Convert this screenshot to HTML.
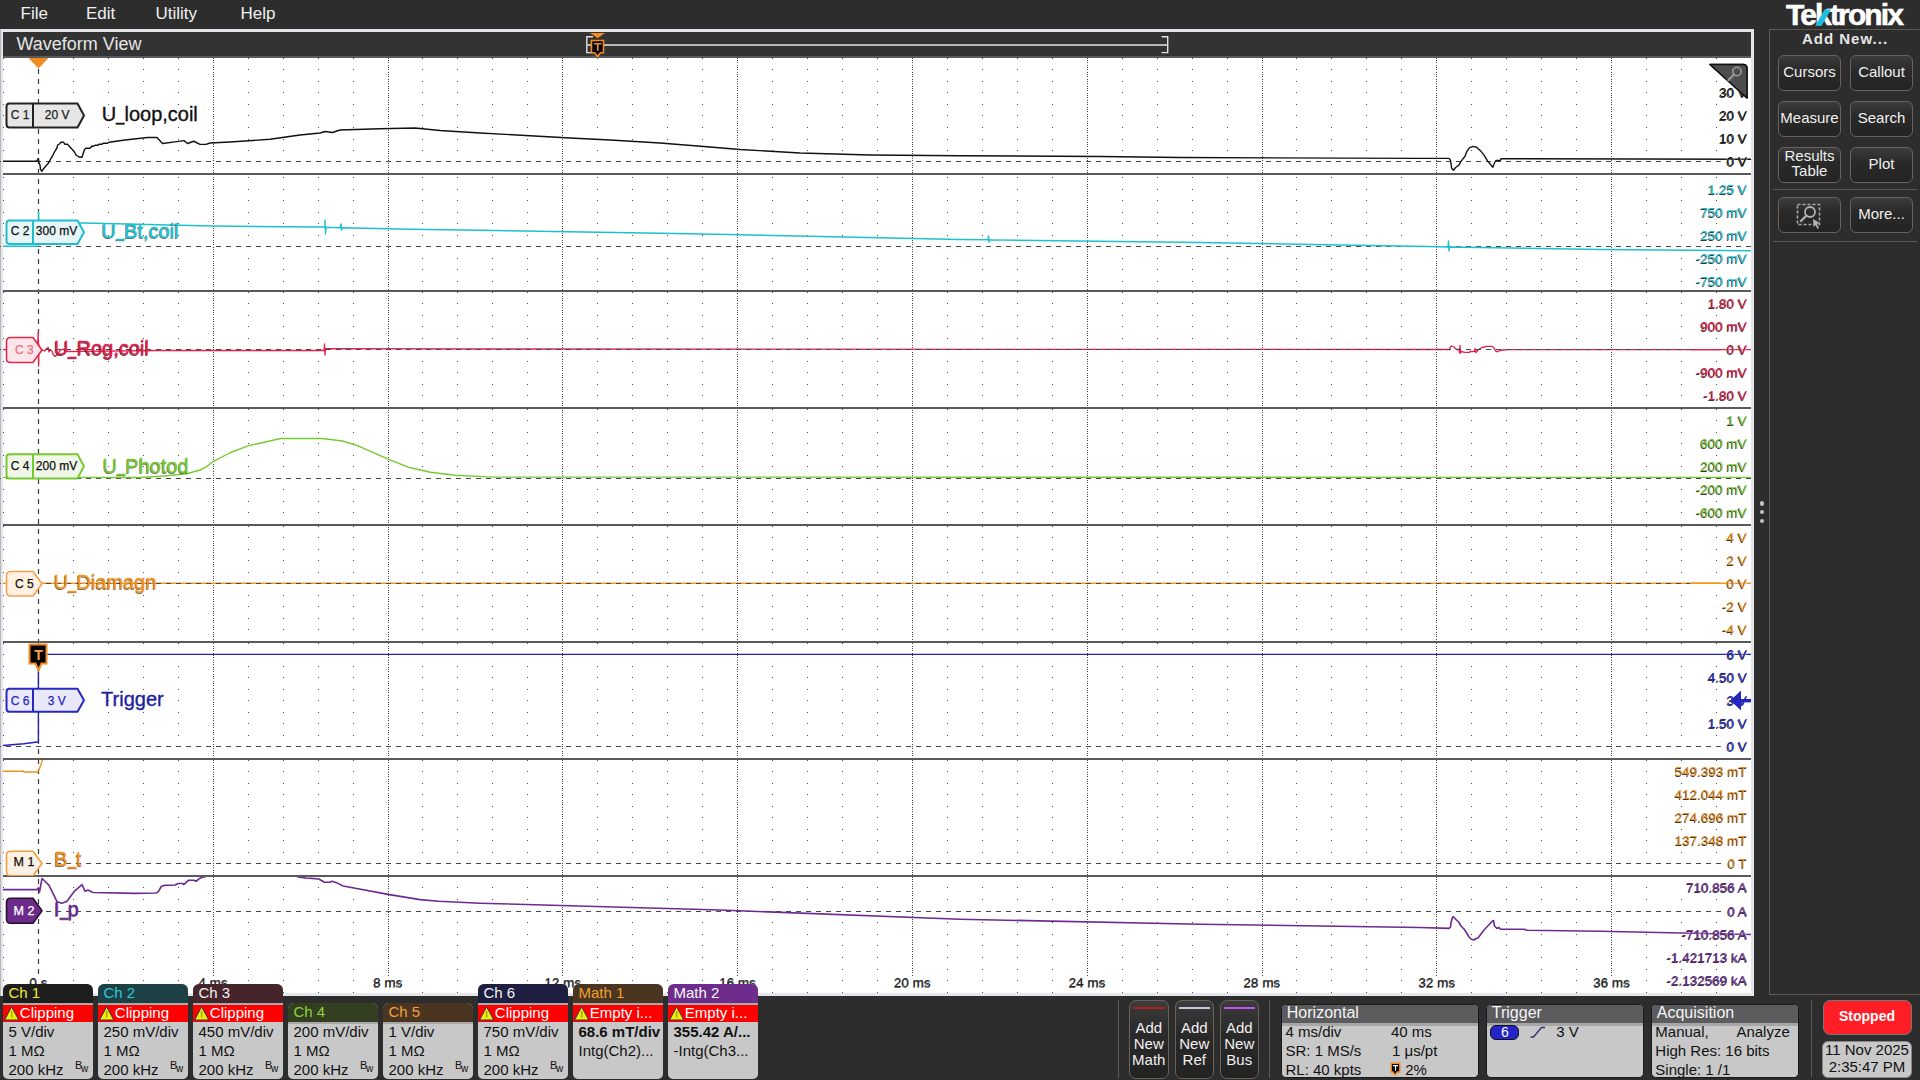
<!DOCTYPE html><html><head><meta charset="utf-8"><style>html,body{margin:0;padding:0;}body{width:1920px;height:1080px;overflow:hidden;position:relative;background:#2d2d2d;font-family:"Liberation Sans",sans-serif;}.t{position:absolute;white-space:pre;}.a{position:absolute;}.lbl{text-shadow:-0.6px 0.6px 0.3px rgba(0,0,0,.75);}.btn{position:absolute;box-sizing:border-box;border:1px solid #6b625a;border-radius:6px;background:linear-gradient(#3c3c3c,#2a2a2a 40%,#232323);}</style></head><body><div class="a" style="left:0;top:0;width:1920px;height:29px;background:#2d2d2d"></div><div class="t" style="left:20.50px;top:5.11px;font-size:17px;line-height:17px;color:#f0f0f0;font-weight:normal;">File</div><div class="t" style="left:86.00px;top:5.11px;font-size:17px;line-height:17px;color:#f0f0f0;font-weight:normal;">Edit</div><div class="t" style="left:155.50px;top:5.11px;font-size:17px;line-height:17px;color:#f0f0f0;font-weight:normal;">Utility</div><div class="t" style="left:240.50px;top:5.11px;font-size:17px;line-height:17px;color:#f0f0f0;font-weight:normal;">Help</div><div class="a" style="left:0;top:29px;width:1754px;height:967px;background:#e3e5e8"></div><div class="a" style="left:0;top:29px;width:1px;height:967px;background:#b6b8bc"></div><div class="a" style="left:3px;top:32px;width:1748px;height:24px;background:#333333"></div><div class="a" style="left:3px;top:56px;width:1748px;height:2px;background:#565a61"></div><div class="a" style="left:3px;top:58px;width:1748px;height:935px;background:#ffffff"></div><div class="t" style="left:16.50px;top:34.76px;font-size:18px;line-height:18px;color:#e6e6e6;font-weight:normal;">Waveform View</div><svg class="a" style="left:0;top:0" width="1920" height="60"><path d="M593 36.8 H586.8 V52.6 H593" fill="none" stroke="#e0e0e0" stroke-width="1.4"/><path d="M1161.5 36.8 H1167.7 V52.6 H1161.5" fill="none" stroke="#e0e0e0" stroke-width="1.4"/><rect x="587" y="44" width="580" height="2" fill="#b8b8b8"/><path d="M590 33 L605 33 L597.6 38.2 Z" fill="#f28c22"/><path d="M591.5 40.5 h12 v12.3 h-3 l-3 3.8 l-3 -3.8 h-3 z" fill="#000" stroke="#f28c22" stroke-width="1.6"/><path d="M594 43 h7.5 v1.6 h-2.9 v6.2 h-1.7 v-6.2 h-2.9 z" fill="#f28c22"/></svg><svg class="a" style="left:0;top:0" width="1920" height="1000" shape-rendering="auto"><path d="M3 69h1v1h-1zM73 69h1v1h-1zM108 69h1v1h-1zM143 69h1v1h-1zM178 69h1v1h-1zM248 69h1v1h-1zM283 69h1v1h-1zM318 69h1v1h-1zM353 69h1v1h-1zM422 69h1v1h-1zM457 69h1v1h-1zM492 69h1v1h-1zM527 69h1v1h-1zM597 69h1v1h-1zM632 69h1v1h-1zM667 69h1v1h-1zM702 69h1v1h-1zM772 69h1v1h-1zM807 69h1v1h-1zM842 69h1v1h-1zM877 69h1v1h-1zM947 69h1v1h-1zM982 69h1v1h-1zM1017 69h1v1h-1zM1052 69h1v1h-1zM1122 69h1v1h-1zM1157 69h1v1h-1zM1192 69h1v1h-1zM1227 69h1v1h-1zM1296 69h1v1h-1zM1331 69h1v1h-1zM1366 69h1v1h-1zM1401 69h1v1h-1zM1471 69h1v1h-1zM1506 69h1v1h-1zM1541 69h1v1h-1zM1576 69h1v1h-1zM1646 69h1v1h-1zM1681 69h1v1h-1zM1716 69h1v1h-1zM3 81h1v1h-1zM73 81h1v1h-1zM108 81h1v1h-1zM143 81h1v1h-1zM178 81h1v1h-1zM248 81h1v1h-1zM283 81h1v1h-1zM318 81h1v1h-1zM353 81h1v1h-1zM422 81h1v1h-1zM457 81h1v1h-1zM492 81h1v1h-1zM527 81h1v1h-1zM597 81h1v1h-1zM632 81h1v1h-1zM667 81h1v1h-1zM702 81h1v1h-1zM772 81h1v1h-1zM807 81h1v1h-1zM842 81h1v1h-1zM877 81h1v1h-1zM947 81h1v1h-1zM982 81h1v1h-1zM1017 81h1v1h-1zM1052 81h1v1h-1zM1122 81h1v1h-1zM1157 81h1v1h-1zM1192 81h1v1h-1zM1227 81h1v1h-1zM1296 81h1v1h-1zM1331 81h1v1h-1zM1366 81h1v1h-1zM1401 81h1v1h-1zM1471 81h1v1h-1zM1506 81h1v1h-1zM1541 81h1v1h-1zM1576 81h1v1h-1zM1646 81h1v1h-1zM1681 81h1v1h-1zM1716 81h1v1h-1zM3 92h1v1h-1zM73 92h1v1h-1zM108 92h1v1h-1zM143 92h1v1h-1zM178 92h1v1h-1zM248 92h1v1h-1zM283 92h1v1h-1zM318 92h1v1h-1zM353 92h1v1h-1zM422 92h1v1h-1zM457 92h1v1h-1zM492 92h1v1h-1zM527 92h1v1h-1zM597 92h1v1h-1zM632 92h1v1h-1zM667 92h1v1h-1zM702 92h1v1h-1zM772 92h1v1h-1zM807 92h1v1h-1zM842 92h1v1h-1zM877 92h1v1h-1zM947 92h1v1h-1zM982 92h1v1h-1zM1017 92h1v1h-1zM1052 92h1v1h-1zM1122 92h1v1h-1zM1157 92h1v1h-1zM1192 92h1v1h-1zM1227 92h1v1h-1zM1296 92h1v1h-1zM1331 92h1v1h-1zM1366 92h1v1h-1zM1401 92h1v1h-1zM1471 92h1v1h-1zM1506 92h1v1h-1zM1541 92h1v1h-1zM1576 92h1v1h-1zM1646 92h1v1h-1zM1681 92h1v1h-1zM1716 92h1v1h-1zM3 104h1v1h-1zM73 104h1v1h-1zM108 104h1v1h-1zM143 104h1v1h-1zM178 104h1v1h-1zM248 104h1v1h-1zM283 104h1v1h-1zM318 104h1v1h-1zM353 104h1v1h-1zM422 104h1v1h-1zM457 104h1v1h-1zM492 104h1v1h-1zM527 104h1v1h-1zM597 104h1v1h-1zM632 104h1v1h-1zM667 104h1v1h-1zM702 104h1v1h-1zM772 104h1v1h-1zM807 104h1v1h-1zM842 104h1v1h-1zM877 104h1v1h-1zM947 104h1v1h-1zM982 104h1v1h-1zM1017 104h1v1h-1zM1052 104h1v1h-1zM1122 104h1v1h-1zM1157 104h1v1h-1zM1192 104h1v1h-1zM1227 104h1v1h-1zM1296 104h1v1h-1zM1331 104h1v1h-1zM1366 104h1v1h-1zM1401 104h1v1h-1zM1471 104h1v1h-1zM1506 104h1v1h-1zM1541 104h1v1h-1zM1576 104h1v1h-1zM1646 104h1v1h-1zM1681 104h1v1h-1zM1716 104h1v1h-1zM3 115h1v1h-1zM73 115h1v1h-1zM108 115h1v1h-1zM143 115h1v1h-1zM178 115h1v1h-1zM248 115h1v1h-1zM283 115h1v1h-1zM318 115h1v1h-1zM353 115h1v1h-1zM422 115h1v1h-1zM457 115h1v1h-1zM492 115h1v1h-1zM527 115h1v1h-1zM597 115h1v1h-1zM632 115h1v1h-1zM667 115h1v1h-1zM702 115h1v1h-1zM772 115h1v1h-1zM807 115h1v1h-1zM842 115h1v1h-1zM877 115h1v1h-1zM947 115h1v1h-1zM982 115h1v1h-1zM1017 115h1v1h-1zM1052 115h1v1h-1zM1122 115h1v1h-1zM1157 115h1v1h-1zM1192 115h1v1h-1zM1227 115h1v1h-1zM1296 115h1v1h-1zM1331 115h1v1h-1zM1366 115h1v1h-1zM1401 115h1v1h-1zM1471 115h1v1h-1zM1506 115h1v1h-1zM1541 115h1v1h-1zM1576 115h1v1h-1zM1646 115h1v1h-1zM1681 115h1v1h-1zM1716 115h1v1h-1zM3 127h1v1h-1zM73 127h1v1h-1zM108 127h1v1h-1zM143 127h1v1h-1zM178 127h1v1h-1zM248 127h1v1h-1zM283 127h1v1h-1zM318 127h1v1h-1zM353 127h1v1h-1zM422 127h1v1h-1zM457 127h1v1h-1zM492 127h1v1h-1zM527 127h1v1h-1zM597 127h1v1h-1zM632 127h1v1h-1zM667 127h1v1h-1zM702 127h1v1h-1zM772 127h1v1h-1zM807 127h1v1h-1zM842 127h1v1h-1zM877 127h1v1h-1zM947 127h1v1h-1zM982 127h1v1h-1zM1017 127h1v1h-1zM1052 127h1v1h-1zM1122 127h1v1h-1zM1157 127h1v1h-1zM1192 127h1v1h-1zM1227 127h1v1h-1zM1296 127h1v1h-1zM1331 127h1v1h-1zM1366 127h1v1h-1zM1401 127h1v1h-1zM1471 127h1v1h-1zM1506 127h1v1h-1zM1541 127h1v1h-1zM1576 127h1v1h-1zM1646 127h1v1h-1zM1681 127h1v1h-1zM1716 127h1v1h-1zM3 139h1v1h-1zM73 139h1v1h-1zM108 139h1v1h-1zM143 139h1v1h-1zM178 139h1v1h-1zM248 139h1v1h-1zM283 139h1v1h-1zM318 139h1v1h-1zM353 139h1v1h-1zM422 139h1v1h-1zM457 139h1v1h-1zM492 139h1v1h-1zM527 139h1v1h-1zM597 139h1v1h-1zM632 139h1v1h-1zM667 139h1v1h-1zM702 139h1v1h-1zM772 139h1v1h-1zM807 139h1v1h-1zM842 139h1v1h-1zM877 139h1v1h-1zM947 139h1v1h-1zM982 139h1v1h-1zM1017 139h1v1h-1zM1052 139h1v1h-1zM1122 139h1v1h-1zM1157 139h1v1h-1zM1192 139h1v1h-1zM1227 139h1v1h-1zM1296 139h1v1h-1zM1331 139h1v1h-1zM1366 139h1v1h-1zM1401 139h1v1h-1zM1471 139h1v1h-1zM1506 139h1v1h-1zM1541 139h1v1h-1zM1576 139h1v1h-1zM1646 139h1v1h-1zM1681 139h1v1h-1zM1716 139h1v1h-1zM3 150h1v1h-1zM73 150h1v1h-1zM108 150h1v1h-1zM143 150h1v1h-1zM178 150h1v1h-1zM248 150h1v1h-1zM283 150h1v1h-1zM318 150h1v1h-1zM353 150h1v1h-1zM422 150h1v1h-1zM457 150h1v1h-1zM492 150h1v1h-1zM527 150h1v1h-1zM597 150h1v1h-1zM632 150h1v1h-1zM667 150h1v1h-1zM702 150h1v1h-1zM772 150h1v1h-1zM807 150h1v1h-1zM842 150h1v1h-1zM877 150h1v1h-1zM947 150h1v1h-1zM982 150h1v1h-1zM1017 150h1v1h-1zM1052 150h1v1h-1zM1122 150h1v1h-1zM1157 150h1v1h-1zM1192 150h1v1h-1zM1227 150h1v1h-1zM1296 150h1v1h-1zM1331 150h1v1h-1zM1366 150h1v1h-1zM1401 150h1v1h-1zM1471 150h1v1h-1zM1506 150h1v1h-1zM1541 150h1v1h-1zM1576 150h1v1h-1zM1646 150h1v1h-1zM1681 150h1v1h-1zM1716 150h1v1h-1zM3 177h1v1h-1zM73 177h1v1h-1zM108 177h1v1h-1zM143 177h1v1h-1zM178 177h1v1h-1zM248 177h1v1h-1zM283 177h1v1h-1zM318 177h1v1h-1zM353 177h1v1h-1zM422 177h1v1h-1zM457 177h1v1h-1zM492 177h1v1h-1zM527 177h1v1h-1zM597 177h1v1h-1zM632 177h1v1h-1zM667 177h1v1h-1zM702 177h1v1h-1zM772 177h1v1h-1zM807 177h1v1h-1zM842 177h1v1h-1zM877 177h1v1h-1zM947 177h1v1h-1zM982 177h1v1h-1zM1017 177h1v1h-1zM1052 177h1v1h-1zM1122 177h1v1h-1zM1157 177h1v1h-1zM1192 177h1v1h-1zM1227 177h1v1h-1zM1296 177h1v1h-1zM1331 177h1v1h-1zM1366 177h1v1h-1zM1401 177h1v1h-1zM1471 177h1v1h-1zM1506 177h1v1h-1zM1541 177h1v1h-1zM1576 177h1v1h-1zM1646 177h1v1h-1zM1681 177h1v1h-1zM1716 177h1v1h-1zM3 189h1v1h-1zM73 189h1v1h-1zM108 189h1v1h-1zM143 189h1v1h-1zM178 189h1v1h-1zM248 189h1v1h-1zM283 189h1v1h-1zM318 189h1v1h-1zM353 189h1v1h-1zM422 189h1v1h-1zM457 189h1v1h-1zM492 189h1v1h-1zM527 189h1v1h-1zM597 189h1v1h-1zM632 189h1v1h-1zM667 189h1v1h-1zM702 189h1v1h-1zM772 189h1v1h-1zM807 189h1v1h-1zM842 189h1v1h-1zM877 189h1v1h-1zM947 189h1v1h-1zM982 189h1v1h-1zM1017 189h1v1h-1zM1052 189h1v1h-1zM1122 189h1v1h-1zM1157 189h1v1h-1zM1192 189h1v1h-1zM1227 189h1v1h-1zM1296 189h1v1h-1zM1331 189h1v1h-1zM1366 189h1v1h-1zM1401 189h1v1h-1zM1471 189h1v1h-1zM1506 189h1v1h-1zM1541 189h1v1h-1zM1576 189h1v1h-1zM1646 189h1v1h-1zM1681 189h1v1h-1zM1716 189h1v1h-1zM3 200h1v1h-1zM73 200h1v1h-1zM108 200h1v1h-1zM143 200h1v1h-1zM178 200h1v1h-1zM248 200h1v1h-1zM283 200h1v1h-1zM318 200h1v1h-1zM353 200h1v1h-1zM422 200h1v1h-1zM457 200h1v1h-1zM492 200h1v1h-1zM527 200h1v1h-1zM597 200h1v1h-1zM632 200h1v1h-1zM667 200h1v1h-1zM702 200h1v1h-1zM772 200h1v1h-1zM807 200h1v1h-1zM842 200h1v1h-1zM877 200h1v1h-1zM947 200h1v1h-1zM982 200h1v1h-1zM1017 200h1v1h-1zM1052 200h1v1h-1zM1122 200h1v1h-1zM1157 200h1v1h-1zM1192 200h1v1h-1zM1227 200h1v1h-1zM1296 200h1v1h-1zM1331 200h1v1h-1zM1366 200h1v1h-1zM1401 200h1v1h-1zM1471 200h1v1h-1zM1506 200h1v1h-1zM1541 200h1v1h-1zM1576 200h1v1h-1zM1646 200h1v1h-1zM1681 200h1v1h-1zM1716 200h1v1h-1zM3 212h1v1h-1zM73 212h1v1h-1zM108 212h1v1h-1zM143 212h1v1h-1zM178 212h1v1h-1zM248 212h1v1h-1zM283 212h1v1h-1zM318 212h1v1h-1zM353 212h1v1h-1zM422 212h1v1h-1zM457 212h1v1h-1zM492 212h1v1h-1zM527 212h1v1h-1zM597 212h1v1h-1zM632 212h1v1h-1zM667 212h1v1h-1zM702 212h1v1h-1zM772 212h1v1h-1zM807 212h1v1h-1zM842 212h1v1h-1zM877 212h1v1h-1zM947 212h1v1h-1zM982 212h1v1h-1zM1017 212h1v1h-1zM1052 212h1v1h-1zM1122 212h1v1h-1zM1157 212h1v1h-1zM1192 212h1v1h-1zM1227 212h1v1h-1zM1296 212h1v1h-1zM1331 212h1v1h-1zM1366 212h1v1h-1zM1401 212h1v1h-1zM1471 212h1v1h-1zM1506 212h1v1h-1zM1541 212h1v1h-1zM1576 212h1v1h-1zM1646 212h1v1h-1zM1681 212h1v1h-1zM1716 212h1v1h-1zM3 223h1v1h-1zM73 223h1v1h-1zM108 223h1v1h-1zM143 223h1v1h-1zM178 223h1v1h-1zM248 223h1v1h-1zM283 223h1v1h-1zM318 223h1v1h-1zM353 223h1v1h-1zM422 223h1v1h-1zM457 223h1v1h-1zM492 223h1v1h-1zM527 223h1v1h-1zM597 223h1v1h-1zM632 223h1v1h-1zM667 223h1v1h-1zM702 223h1v1h-1zM772 223h1v1h-1zM807 223h1v1h-1zM842 223h1v1h-1zM877 223h1v1h-1zM947 223h1v1h-1zM982 223h1v1h-1zM1017 223h1v1h-1zM1052 223h1v1h-1zM1122 223h1v1h-1zM1157 223h1v1h-1zM1192 223h1v1h-1zM1227 223h1v1h-1zM1296 223h1v1h-1zM1331 223h1v1h-1zM1366 223h1v1h-1zM1401 223h1v1h-1zM1471 223h1v1h-1zM1506 223h1v1h-1zM1541 223h1v1h-1zM1576 223h1v1h-1zM1646 223h1v1h-1zM1681 223h1v1h-1zM1716 223h1v1h-1zM3 235h1v1h-1zM73 235h1v1h-1zM108 235h1v1h-1zM143 235h1v1h-1zM178 235h1v1h-1zM248 235h1v1h-1zM283 235h1v1h-1zM318 235h1v1h-1zM353 235h1v1h-1zM422 235h1v1h-1zM457 235h1v1h-1zM492 235h1v1h-1zM527 235h1v1h-1zM597 235h1v1h-1zM632 235h1v1h-1zM667 235h1v1h-1zM702 235h1v1h-1zM772 235h1v1h-1zM807 235h1v1h-1zM842 235h1v1h-1zM877 235h1v1h-1zM947 235h1v1h-1zM982 235h1v1h-1zM1017 235h1v1h-1zM1052 235h1v1h-1zM1122 235h1v1h-1zM1157 235h1v1h-1zM1192 235h1v1h-1zM1227 235h1v1h-1zM1296 235h1v1h-1zM1331 235h1v1h-1zM1366 235h1v1h-1zM1401 235h1v1h-1zM1471 235h1v1h-1zM1506 235h1v1h-1zM1541 235h1v1h-1zM1576 235h1v1h-1zM1646 235h1v1h-1zM1681 235h1v1h-1zM1716 235h1v1h-1zM3 258h1v1h-1zM73 258h1v1h-1zM108 258h1v1h-1zM143 258h1v1h-1zM178 258h1v1h-1zM248 258h1v1h-1zM283 258h1v1h-1zM318 258h1v1h-1zM353 258h1v1h-1zM422 258h1v1h-1zM457 258h1v1h-1zM492 258h1v1h-1zM527 258h1v1h-1zM597 258h1v1h-1zM632 258h1v1h-1zM667 258h1v1h-1zM702 258h1v1h-1zM772 258h1v1h-1zM807 258h1v1h-1zM842 258h1v1h-1zM877 258h1v1h-1zM947 258h1v1h-1zM982 258h1v1h-1zM1017 258h1v1h-1zM1052 258h1v1h-1zM1122 258h1v1h-1zM1157 258h1v1h-1zM1192 258h1v1h-1zM1227 258h1v1h-1zM1296 258h1v1h-1zM1331 258h1v1h-1zM1366 258h1v1h-1zM1401 258h1v1h-1zM1471 258h1v1h-1zM1506 258h1v1h-1zM1541 258h1v1h-1zM1576 258h1v1h-1zM1646 258h1v1h-1zM1681 258h1v1h-1zM1716 258h1v1h-1zM3 269h1v1h-1zM73 269h1v1h-1zM108 269h1v1h-1zM143 269h1v1h-1zM178 269h1v1h-1zM248 269h1v1h-1zM283 269h1v1h-1zM318 269h1v1h-1zM353 269h1v1h-1zM422 269h1v1h-1zM457 269h1v1h-1zM492 269h1v1h-1zM527 269h1v1h-1zM597 269h1v1h-1zM632 269h1v1h-1zM667 269h1v1h-1zM702 269h1v1h-1zM772 269h1v1h-1zM807 269h1v1h-1zM842 269h1v1h-1zM877 269h1v1h-1zM947 269h1v1h-1zM982 269h1v1h-1zM1017 269h1v1h-1zM1052 269h1v1h-1zM1122 269h1v1h-1zM1157 269h1v1h-1zM1192 269h1v1h-1zM1227 269h1v1h-1zM1296 269h1v1h-1zM1331 269h1v1h-1zM1366 269h1v1h-1zM1401 269h1v1h-1zM1471 269h1v1h-1zM1506 269h1v1h-1zM1541 269h1v1h-1zM1576 269h1v1h-1zM1646 269h1v1h-1zM1681 269h1v1h-1zM1716 269h1v1h-1zM3 281h1v1h-1zM73 281h1v1h-1zM108 281h1v1h-1zM143 281h1v1h-1zM178 281h1v1h-1zM248 281h1v1h-1zM283 281h1v1h-1zM318 281h1v1h-1zM353 281h1v1h-1zM422 281h1v1h-1zM457 281h1v1h-1zM492 281h1v1h-1zM527 281h1v1h-1zM597 281h1v1h-1zM632 281h1v1h-1zM667 281h1v1h-1zM702 281h1v1h-1zM772 281h1v1h-1zM807 281h1v1h-1zM842 281h1v1h-1zM877 281h1v1h-1zM947 281h1v1h-1zM982 281h1v1h-1zM1017 281h1v1h-1zM1052 281h1v1h-1zM1122 281h1v1h-1zM1157 281h1v1h-1zM1192 281h1v1h-1zM1227 281h1v1h-1zM1296 281h1v1h-1zM1331 281h1v1h-1zM1366 281h1v1h-1zM1401 281h1v1h-1zM1471 281h1v1h-1zM1506 281h1v1h-1zM1541 281h1v1h-1zM1576 281h1v1h-1zM1646 281h1v1h-1zM1681 281h1v1h-1zM1716 281h1v1h-1zM3 292h1v1h-1zM73 292h1v1h-1zM108 292h1v1h-1zM143 292h1v1h-1zM178 292h1v1h-1zM248 292h1v1h-1zM283 292h1v1h-1zM318 292h1v1h-1zM353 292h1v1h-1zM422 292h1v1h-1zM457 292h1v1h-1zM492 292h1v1h-1zM527 292h1v1h-1zM597 292h1v1h-1zM632 292h1v1h-1zM667 292h1v1h-1zM702 292h1v1h-1zM772 292h1v1h-1zM807 292h1v1h-1zM842 292h1v1h-1zM877 292h1v1h-1zM947 292h1v1h-1zM982 292h1v1h-1zM1017 292h1v1h-1zM1052 292h1v1h-1zM1122 292h1v1h-1zM1157 292h1v1h-1zM1192 292h1v1h-1zM1227 292h1v1h-1zM1296 292h1v1h-1zM1331 292h1v1h-1zM1366 292h1v1h-1zM1401 292h1v1h-1zM1471 292h1v1h-1zM1506 292h1v1h-1zM1541 292h1v1h-1zM1576 292h1v1h-1zM1646 292h1v1h-1zM1681 292h1v1h-1zM1716 292h1v1h-1zM3 303h1v1h-1zM73 303h1v1h-1zM108 303h1v1h-1zM143 303h1v1h-1zM178 303h1v1h-1zM248 303h1v1h-1zM283 303h1v1h-1zM318 303h1v1h-1zM353 303h1v1h-1zM422 303h1v1h-1zM457 303h1v1h-1zM492 303h1v1h-1zM527 303h1v1h-1zM597 303h1v1h-1zM632 303h1v1h-1zM667 303h1v1h-1zM702 303h1v1h-1zM772 303h1v1h-1zM807 303h1v1h-1zM842 303h1v1h-1zM877 303h1v1h-1zM947 303h1v1h-1zM982 303h1v1h-1zM1017 303h1v1h-1zM1052 303h1v1h-1zM1122 303h1v1h-1zM1157 303h1v1h-1zM1192 303h1v1h-1zM1227 303h1v1h-1zM1296 303h1v1h-1zM1331 303h1v1h-1zM1366 303h1v1h-1zM1401 303h1v1h-1zM1471 303h1v1h-1zM1506 303h1v1h-1zM1541 303h1v1h-1zM1576 303h1v1h-1zM1646 303h1v1h-1zM1681 303h1v1h-1zM1716 303h1v1h-1zM3 315h1v1h-1zM73 315h1v1h-1zM108 315h1v1h-1zM143 315h1v1h-1zM178 315h1v1h-1zM248 315h1v1h-1zM283 315h1v1h-1zM318 315h1v1h-1zM353 315h1v1h-1zM422 315h1v1h-1zM457 315h1v1h-1zM492 315h1v1h-1zM527 315h1v1h-1zM597 315h1v1h-1zM632 315h1v1h-1zM667 315h1v1h-1zM702 315h1v1h-1zM772 315h1v1h-1zM807 315h1v1h-1zM842 315h1v1h-1zM877 315h1v1h-1zM947 315h1v1h-1zM982 315h1v1h-1zM1017 315h1v1h-1zM1052 315h1v1h-1zM1122 315h1v1h-1zM1157 315h1v1h-1zM1192 315h1v1h-1zM1227 315h1v1h-1zM1296 315h1v1h-1zM1331 315h1v1h-1zM1366 315h1v1h-1zM1401 315h1v1h-1zM1471 315h1v1h-1zM1506 315h1v1h-1zM1541 315h1v1h-1zM1576 315h1v1h-1zM1646 315h1v1h-1zM1681 315h1v1h-1zM1716 315h1v1h-1zM3 326h1v1h-1zM73 326h1v1h-1zM108 326h1v1h-1zM143 326h1v1h-1zM178 326h1v1h-1zM248 326h1v1h-1zM283 326h1v1h-1zM318 326h1v1h-1zM353 326h1v1h-1zM422 326h1v1h-1zM457 326h1v1h-1zM492 326h1v1h-1zM527 326h1v1h-1zM597 326h1v1h-1zM632 326h1v1h-1zM667 326h1v1h-1zM702 326h1v1h-1zM772 326h1v1h-1zM807 326h1v1h-1zM842 326h1v1h-1zM877 326h1v1h-1zM947 326h1v1h-1zM982 326h1v1h-1zM1017 326h1v1h-1zM1052 326h1v1h-1zM1122 326h1v1h-1zM1157 326h1v1h-1zM1192 326h1v1h-1zM1227 326h1v1h-1zM1296 326h1v1h-1zM1331 326h1v1h-1zM1366 326h1v1h-1zM1401 326h1v1h-1zM1471 326h1v1h-1zM1506 326h1v1h-1zM1541 326h1v1h-1zM1576 326h1v1h-1zM1646 326h1v1h-1zM1681 326h1v1h-1zM1716 326h1v1h-1zM3 338h1v1h-1zM73 338h1v1h-1zM108 338h1v1h-1zM143 338h1v1h-1zM178 338h1v1h-1zM248 338h1v1h-1zM283 338h1v1h-1zM318 338h1v1h-1zM353 338h1v1h-1zM422 338h1v1h-1zM457 338h1v1h-1zM492 338h1v1h-1zM527 338h1v1h-1zM597 338h1v1h-1zM632 338h1v1h-1zM667 338h1v1h-1zM702 338h1v1h-1zM772 338h1v1h-1zM807 338h1v1h-1zM842 338h1v1h-1zM877 338h1v1h-1zM947 338h1v1h-1zM982 338h1v1h-1zM1017 338h1v1h-1zM1052 338h1v1h-1zM1122 338h1v1h-1zM1157 338h1v1h-1zM1192 338h1v1h-1zM1227 338h1v1h-1zM1296 338h1v1h-1zM1331 338h1v1h-1zM1366 338h1v1h-1zM1401 338h1v1h-1zM1471 338h1v1h-1zM1506 338h1v1h-1zM1541 338h1v1h-1zM1576 338h1v1h-1zM1646 338h1v1h-1zM1681 338h1v1h-1zM1716 338h1v1h-1zM3 361h1v1h-1zM73 361h1v1h-1zM108 361h1v1h-1zM143 361h1v1h-1zM178 361h1v1h-1zM248 361h1v1h-1zM283 361h1v1h-1zM318 361h1v1h-1zM353 361h1v1h-1zM422 361h1v1h-1zM457 361h1v1h-1zM492 361h1v1h-1zM527 361h1v1h-1zM597 361h1v1h-1zM632 361h1v1h-1zM667 361h1v1h-1zM702 361h1v1h-1zM772 361h1v1h-1zM807 361h1v1h-1zM842 361h1v1h-1zM877 361h1v1h-1zM947 361h1v1h-1zM982 361h1v1h-1zM1017 361h1v1h-1zM1052 361h1v1h-1zM1122 361h1v1h-1zM1157 361h1v1h-1zM1192 361h1v1h-1zM1227 361h1v1h-1zM1296 361h1v1h-1zM1331 361h1v1h-1zM1366 361h1v1h-1zM1401 361h1v1h-1zM1471 361h1v1h-1zM1506 361h1v1h-1zM1541 361h1v1h-1zM1576 361h1v1h-1zM1646 361h1v1h-1zM1681 361h1v1h-1zM1716 361h1v1h-1zM3 372h1v1h-1zM73 372h1v1h-1zM108 372h1v1h-1zM143 372h1v1h-1zM178 372h1v1h-1zM248 372h1v1h-1zM283 372h1v1h-1zM318 372h1v1h-1zM353 372h1v1h-1zM422 372h1v1h-1zM457 372h1v1h-1zM492 372h1v1h-1zM527 372h1v1h-1zM597 372h1v1h-1zM632 372h1v1h-1zM667 372h1v1h-1zM702 372h1v1h-1zM772 372h1v1h-1zM807 372h1v1h-1zM842 372h1v1h-1zM877 372h1v1h-1zM947 372h1v1h-1zM982 372h1v1h-1zM1017 372h1v1h-1zM1052 372h1v1h-1zM1122 372h1v1h-1zM1157 372h1v1h-1zM1192 372h1v1h-1zM1227 372h1v1h-1zM1296 372h1v1h-1zM1331 372h1v1h-1zM1366 372h1v1h-1zM1401 372h1v1h-1zM1471 372h1v1h-1zM1506 372h1v1h-1zM1541 372h1v1h-1zM1576 372h1v1h-1zM1646 372h1v1h-1zM1681 372h1v1h-1zM1716 372h1v1h-1zM3 384h1v1h-1zM73 384h1v1h-1zM108 384h1v1h-1zM143 384h1v1h-1zM178 384h1v1h-1zM248 384h1v1h-1zM283 384h1v1h-1zM318 384h1v1h-1zM353 384h1v1h-1zM422 384h1v1h-1zM457 384h1v1h-1zM492 384h1v1h-1zM527 384h1v1h-1zM597 384h1v1h-1zM632 384h1v1h-1zM667 384h1v1h-1zM702 384h1v1h-1zM772 384h1v1h-1zM807 384h1v1h-1zM842 384h1v1h-1zM877 384h1v1h-1zM947 384h1v1h-1zM982 384h1v1h-1zM1017 384h1v1h-1zM1052 384h1v1h-1zM1122 384h1v1h-1zM1157 384h1v1h-1zM1192 384h1v1h-1zM1227 384h1v1h-1zM1296 384h1v1h-1zM1331 384h1v1h-1zM1366 384h1v1h-1zM1401 384h1v1h-1zM1471 384h1v1h-1zM1506 384h1v1h-1zM1541 384h1v1h-1zM1576 384h1v1h-1zM1646 384h1v1h-1zM1681 384h1v1h-1zM1716 384h1v1h-1zM3 395h1v1h-1zM73 395h1v1h-1zM108 395h1v1h-1zM143 395h1v1h-1zM178 395h1v1h-1zM248 395h1v1h-1zM283 395h1v1h-1zM318 395h1v1h-1zM353 395h1v1h-1zM422 395h1v1h-1zM457 395h1v1h-1zM492 395h1v1h-1zM527 395h1v1h-1zM597 395h1v1h-1zM632 395h1v1h-1zM667 395h1v1h-1zM702 395h1v1h-1zM772 395h1v1h-1zM807 395h1v1h-1zM842 395h1v1h-1zM877 395h1v1h-1zM947 395h1v1h-1zM982 395h1v1h-1zM1017 395h1v1h-1zM1052 395h1v1h-1zM1122 395h1v1h-1zM1157 395h1v1h-1zM1192 395h1v1h-1zM1227 395h1v1h-1zM1296 395h1v1h-1zM1331 395h1v1h-1zM1366 395h1v1h-1zM1401 395h1v1h-1zM1471 395h1v1h-1zM1506 395h1v1h-1zM1541 395h1v1h-1zM1576 395h1v1h-1zM1646 395h1v1h-1zM1681 395h1v1h-1zM1716 395h1v1h-1zM3 409h1v1h-1zM73 409h1v1h-1zM108 409h1v1h-1zM143 409h1v1h-1zM178 409h1v1h-1zM248 409h1v1h-1zM283 409h1v1h-1zM318 409h1v1h-1zM353 409h1v1h-1zM422 409h1v1h-1zM457 409h1v1h-1zM492 409h1v1h-1zM527 409h1v1h-1zM597 409h1v1h-1zM632 409h1v1h-1zM667 409h1v1h-1zM702 409h1v1h-1zM772 409h1v1h-1zM807 409h1v1h-1zM842 409h1v1h-1zM877 409h1v1h-1zM947 409h1v1h-1zM982 409h1v1h-1zM1017 409h1v1h-1zM1052 409h1v1h-1zM1122 409h1v1h-1zM1157 409h1v1h-1zM1192 409h1v1h-1zM1227 409h1v1h-1zM1296 409h1v1h-1zM1331 409h1v1h-1zM1366 409h1v1h-1zM1401 409h1v1h-1zM1471 409h1v1h-1zM1506 409h1v1h-1zM1541 409h1v1h-1zM1576 409h1v1h-1zM1646 409h1v1h-1zM1681 409h1v1h-1zM1716 409h1v1h-1zM3 420h1v1h-1zM73 420h1v1h-1zM108 420h1v1h-1zM143 420h1v1h-1zM178 420h1v1h-1zM248 420h1v1h-1zM283 420h1v1h-1zM318 420h1v1h-1zM353 420h1v1h-1zM422 420h1v1h-1zM457 420h1v1h-1zM492 420h1v1h-1zM527 420h1v1h-1zM597 420h1v1h-1zM632 420h1v1h-1zM667 420h1v1h-1zM702 420h1v1h-1zM772 420h1v1h-1zM807 420h1v1h-1zM842 420h1v1h-1zM877 420h1v1h-1zM947 420h1v1h-1zM982 420h1v1h-1zM1017 420h1v1h-1zM1052 420h1v1h-1zM1122 420h1v1h-1zM1157 420h1v1h-1zM1192 420h1v1h-1zM1227 420h1v1h-1zM1296 420h1v1h-1zM1331 420h1v1h-1zM1366 420h1v1h-1zM1401 420h1v1h-1zM1471 420h1v1h-1zM1506 420h1v1h-1zM1541 420h1v1h-1zM1576 420h1v1h-1zM1646 420h1v1h-1zM1681 420h1v1h-1zM1716 420h1v1h-1zM3 432h1v1h-1zM73 432h1v1h-1zM108 432h1v1h-1zM143 432h1v1h-1zM178 432h1v1h-1zM248 432h1v1h-1zM283 432h1v1h-1zM318 432h1v1h-1zM353 432h1v1h-1zM422 432h1v1h-1zM457 432h1v1h-1zM492 432h1v1h-1zM527 432h1v1h-1zM597 432h1v1h-1zM632 432h1v1h-1zM667 432h1v1h-1zM702 432h1v1h-1zM772 432h1v1h-1zM807 432h1v1h-1zM842 432h1v1h-1zM877 432h1v1h-1zM947 432h1v1h-1zM982 432h1v1h-1zM1017 432h1v1h-1zM1052 432h1v1h-1zM1122 432h1v1h-1zM1157 432h1v1h-1zM1192 432h1v1h-1zM1227 432h1v1h-1zM1296 432h1v1h-1zM1331 432h1v1h-1zM1366 432h1v1h-1zM1401 432h1v1h-1zM1471 432h1v1h-1zM1506 432h1v1h-1zM1541 432h1v1h-1zM1576 432h1v1h-1zM1646 432h1v1h-1zM1681 432h1v1h-1zM1716 432h1v1h-1zM3 443h1v1h-1zM73 443h1v1h-1zM108 443h1v1h-1zM143 443h1v1h-1zM178 443h1v1h-1zM248 443h1v1h-1zM283 443h1v1h-1zM318 443h1v1h-1zM353 443h1v1h-1zM422 443h1v1h-1zM457 443h1v1h-1zM492 443h1v1h-1zM527 443h1v1h-1zM597 443h1v1h-1zM632 443h1v1h-1zM667 443h1v1h-1zM702 443h1v1h-1zM772 443h1v1h-1zM807 443h1v1h-1zM842 443h1v1h-1zM877 443h1v1h-1zM947 443h1v1h-1zM982 443h1v1h-1zM1017 443h1v1h-1zM1052 443h1v1h-1zM1122 443h1v1h-1zM1157 443h1v1h-1zM1192 443h1v1h-1zM1227 443h1v1h-1zM1296 443h1v1h-1zM1331 443h1v1h-1zM1366 443h1v1h-1zM1401 443h1v1h-1zM1471 443h1v1h-1zM1506 443h1v1h-1zM1541 443h1v1h-1zM1576 443h1v1h-1zM1646 443h1v1h-1zM1681 443h1v1h-1zM1716 443h1v1h-1zM3 455h1v1h-1zM73 455h1v1h-1zM108 455h1v1h-1zM143 455h1v1h-1zM178 455h1v1h-1zM248 455h1v1h-1zM283 455h1v1h-1zM318 455h1v1h-1zM353 455h1v1h-1zM422 455h1v1h-1zM457 455h1v1h-1zM492 455h1v1h-1zM527 455h1v1h-1zM597 455h1v1h-1zM632 455h1v1h-1zM667 455h1v1h-1zM702 455h1v1h-1zM772 455h1v1h-1zM807 455h1v1h-1zM842 455h1v1h-1zM877 455h1v1h-1zM947 455h1v1h-1zM982 455h1v1h-1zM1017 455h1v1h-1zM1052 455h1v1h-1zM1122 455h1v1h-1zM1157 455h1v1h-1zM1192 455h1v1h-1zM1227 455h1v1h-1zM1296 455h1v1h-1zM1331 455h1v1h-1zM1366 455h1v1h-1zM1401 455h1v1h-1zM1471 455h1v1h-1zM1506 455h1v1h-1zM1541 455h1v1h-1zM1576 455h1v1h-1zM1646 455h1v1h-1zM1681 455h1v1h-1zM1716 455h1v1h-1zM3 466h1v1h-1zM73 466h1v1h-1zM108 466h1v1h-1zM143 466h1v1h-1zM178 466h1v1h-1zM248 466h1v1h-1zM283 466h1v1h-1zM318 466h1v1h-1zM353 466h1v1h-1zM422 466h1v1h-1zM457 466h1v1h-1zM492 466h1v1h-1zM527 466h1v1h-1zM597 466h1v1h-1zM632 466h1v1h-1zM667 466h1v1h-1zM702 466h1v1h-1zM772 466h1v1h-1zM807 466h1v1h-1zM842 466h1v1h-1zM877 466h1v1h-1zM947 466h1v1h-1zM982 466h1v1h-1zM1017 466h1v1h-1zM1052 466h1v1h-1zM1122 466h1v1h-1zM1157 466h1v1h-1zM1192 466h1v1h-1zM1227 466h1v1h-1zM1296 466h1v1h-1zM1331 466h1v1h-1zM1366 466h1v1h-1zM1401 466h1v1h-1zM1471 466h1v1h-1zM1506 466h1v1h-1zM1541 466h1v1h-1zM1576 466h1v1h-1zM1646 466h1v1h-1zM1681 466h1v1h-1zM1716 466h1v1h-1zM3 489h1v1h-1zM73 489h1v1h-1zM108 489h1v1h-1zM143 489h1v1h-1zM178 489h1v1h-1zM248 489h1v1h-1zM283 489h1v1h-1zM318 489h1v1h-1zM353 489h1v1h-1zM422 489h1v1h-1zM457 489h1v1h-1zM492 489h1v1h-1zM527 489h1v1h-1zM597 489h1v1h-1zM632 489h1v1h-1zM667 489h1v1h-1zM702 489h1v1h-1zM772 489h1v1h-1zM807 489h1v1h-1zM842 489h1v1h-1zM877 489h1v1h-1zM947 489h1v1h-1zM982 489h1v1h-1zM1017 489h1v1h-1zM1052 489h1v1h-1zM1122 489h1v1h-1zM1157 489h1v1h-1zM1192 489h1v1h-1zM1227 489h1v1h-1zM1296 489h1v1h-1zM1331 489h1v1h-1zM1366 489h1v1h-1zM1401 489h1v1h-1zM1471 489h1v1h-1zM1506 489h1v1h-1zM1541 489h1v1h-1zM1576 489h1v1h-1zM1646 489h1v1h-1zM1681 489h1v1h-1zM1716 489h1v1h-1zM3 501h1v1h-1zM73 501h1v1h-1zM108 501h1v1h-1zM143 501h1v1h-1zM178 501h1v1h-1zM248 501h1v1h-1zM283 501h1v1h-1zM318 501h1v1h-1zM353 501h1v1h-1zM422 501h1v1h-1zM457 501h1v1h-1zM492 501h1v1h-1zM527 501h1v1h-1zM597 501h1v1h-1zM632 501h1v1h-1zM667 501h1v1h-1zM702 501h1v1h-1zM772 501h1v1h-1zM807 501h1v1h-1zM842 501h1v1h-1zM877 501h1v1h-1zM947 501h1v1h-1zM982 501h1v1h-1zM1017 501h1v1h-1zM1052 501h1v1h-1zM1122 501h1v1h-1zM1157 501h1v1h-1zM1192 501h1v1h-1zM1227 501h1v1h-1zM1296 501h1v1h-1zM1331 501h1v1h-1zM1366 501h1v1h-1zM1401 501h1v1h-1zM1471 501h1v1h-1zM1506 501h1v1h-1zM1541 501h1v1h-1zM1576 501h1v1h-1zM1646 501h1v1h-1zM1681 501h1v1h-1zM1716 501h1v1h-1zM3 512h1v1h-1zM73 512h1v1h-1zM108 512h1v1h-1zM143 512h1v1h-1zM178 512h1v1h-1zM248 512h1v1h-1zM283 512h1v1h-1zM318 512h1v1h-1zM353 512h1v1h-1zM422 512h1v1h-1zM457 512h1v1h-1zM492 512h1v1h-1zM527 512h1v1h-1zM597 512h1v1h-1zM632 512h1v1h-1zM667 512h1v1h-1zM702 512h1v1h-1zM772 512h1v1h-1zM807 512h1v1h-1zM842 512h1v1h-1zM877 512h1v1h-1zM947 512h1v1h-1zM982 512h1v1h-1zM1017 512h1v1h-1zM1052 512h1v1h-1zM1122 512h1v1h-1zM1157 512h1v1h-1zM1192 512h1v1h-1zM1227 512h1v1h-1zM1296 512h1v1h-1zM1331 512h1v1h-1zM1366 512h1v1h-1zM1401 512h1v1h-1zM1471 512h1v1h-1zM1506 512h1v1h-1zM1541 512h1v1h-1zM1576 512h1v1h-1zM1646 512h1v1h-1zM1681 512h1v1h-1zM1716 512h1v1h-1zM3 526h1v1h-1zM73 526h1v1h-1zM108 526h1v1h-1zM143 526h1v1h-1zM178 526h1v1h-1zM248 526h1v1h-1zM283 526h1v1h-1zM318 526h1v1h-1zM353 526h1v1h-1zM422 526h1v1h-1zM457 526h1v1h-1zM492 526h1v1h-1zM527 526h1v1h-1zM597 526h1v1h-1zM632 526h1v1h-1zM667 526h1v1h-1zM702 526h1v1h-1zM772 526h1v1h-1zM807 526h1v1h-1zM842 526h1v1h-1zM877 526h1v1h-1zM947 526h1v1h-1zM982 526h1v1h-1zM1017 526h1v1h-1zM1052 526h1v1h-1zM1122 526h1v1h-1zM1157 526h1v1h-1zM1192 526h1v1h-1zM1227 526h1v1h-1zM1296 526h1v1h-1zM1331 526h1v1h-1zM1366 526h1v1h-1zM1401 526h1v1h-1zM1471 526h1v1h-1zM1506 526h1v1h-1zM1541 526h1v1h-1zM1576 526h1v1h-1zM1646 526h1v1h-1zM1681 526h1v1h-1zM1716 526h1v1h-1zM3 537h1v1h-1zM73 537h1v1h-1zM108 537h1v1h-1zM143 537h1v1h-1zM178 537h1v1h-1zM248 537h1v1h-1zM283 537h1v1h-1zM318 537h1v1h-1zM353 537h1v1h-1zM422 537h1v1h-1zM457 537h1v1h-1zM492 537h1v1h-1zM527 537h1v1h-1zM597 537h1v1h-1zM632 537h1v1h-1zM667 537h1v1h-1zM702 537h1v1h-1zM772 537h1v1h-1zM807 537h1v1h-1zM842 537h1v1h-1zM877 537h1v1h-1zM947 537h1v1h-1zM982 537h1v1h-1zM1017 537h1v1h-1zM1052 537h1v1h-1zM1122 537h1v1h-1zM1157 537h1v1h-1zM1192 537h1v1h-1zM1227 537h1v1h-1zM1296 537h1v1h-1zM1331 537h1v1h-1zM1366 537h1v1h-1zM1401 537h1v1h-1zM1471 537h1v1h-1zM1506 537h1v1h-1zM1541 537h1v1h-1zM1576 537h1v1h-1zM1646 537h1v1h-1zM1681 537h1v1h-1zM1716 537h1v1h-1zM3 549h1v1h-1zM73 549h1v1h-1zM108 549h1v1h-1zM143 549h1v1h-1zM178 549h1v1h-1zM248 549h1v1h-1zM283 549h1v1h-1zM318 549h1v1h-1zM353 549h1v1h-1zM422 549h1v1h-1zM457 549h1v1h-1zM492 549h1v1h-1zM527 549h1v1h-1zM597 549h1v1h-1zM632 549h1v1h-1zM667 549h1v1h-1zM702 549h1v1h-1zM772 549h1v1h-1zM807 549h1v1h-1zM842 549h1v1h-1zM877 549h1v1h-1zM947 549h1v1h-1zM982 549h1v1h-1zM1017 549h1v1h-1zM1052 549h1v1h-1zM1122 549h1v1h-1zM1157 549h1v1h-1zM1192 549h1v1h-1zM1227 549h1v1h-1zM1296 549h1v1h-1zM1331 549h1v1h-1zM1366 549h1v1h-1zM1401 549h1v1h-1zM1471 549h1v1h-1zM1506 549h1v1h-1zM1541 549h1v1h-1zM1576 549h1v1h-1zM1646 549h1v1h-1zM1681 549h1v1h-1zM1716 549h1v1h-1zM3 560h1v1h-1zM73 560h1v1h-1zM108 560h1v1h-1zM143 560h1v1h-1zM178 560h1v1h-1zM248 560h1v1h-1zM283 560h1v1h-1zM318 560h1v1h-1zM353 560h1v1h-1zM422 560h1v1h-1zM457 560h1v1h-1zM492 560h1v1h-1zM527 560h1v1h-1zM597 560h1v1h-1zM632 560h1v1h-1zM667 560h1v1h-1zM702 560h1v1h-1zM772 560h1v1h-1zM807 560h1v1h-1zM842 560h1v1h-1zM877 560h1v1h-1zM947 560h1v1h-1zM982 560h1v1h-1zM1017 560h1v1h-1zM1052 560h1v1h-1zM1122 560h1v1h-1zM1157 560h1v1h-1zM1192 560h1v1h-1zM1227 560h1v1h-1zM1296 560h1v1h-1zM1331 560h1v1h-1zM1366 560h1v1h-1zM1401 560h1v1h-1zM1471 560h1v1h-1zM1506 560h1v1h-1zM1541 560h1v1h-1zM1576 560h1v1h-1zM1646 560h1v1h-1zM1681 560h1v1h-1zM1716 560h1v1h-1zM3 572h1v1h-1zM73 572h1v1h-1zM108 572h1v1h-1zM143 572h1v1h-1zM178 572h1v1h-1zM248 572h1v1h-1zM283 572h1v1h-1zM318 572h1v1h-1zM353 572h1v1h-1zM422 572h1v1h-1zM457 572h1v1h-1zM492 572h1v1h-1zM527 572h1v1h-1zM597 572h1v1h-1zM632 572h1v1h-1zM667 572h1v1h-1zM702 572h1v1h-1zM772 572h1v1h-1zM807 572h1v1h-1zM842 572h1v1h-1zM877 572h1v1h-1zM947 572h1v1h-1zM982 572h1v1h-1zM1017 572h1v1h-1zM1052 572h1v1h-1zM1122 572h1v1h-1zM1157 572h1v1h-1zM1192 572h1v1h-1zM1227 572h1v1h-1zM1296 572h1v1h-1zM1331 572h1v1h-1zM1366 572h1v1h-1zM1401 572h1v1h-1zM1471 572h1v1h-1zM1506 572h1v1h-1zM1541 572h1v1h-1zM1576 572h1v1h-1zM1646 572h1v1h-1zM1681 572h1v1h-1zM1716 572h1v1h-1zM3 595h1v1h-1zM73 595h1v1h-1zM108 595h1v1h-1zM143 595h1v1h-1zM178 595h1v1h-1zM248 595h1v1h-1zM283 595h1v1h-1zM318 595h1v1h-1zM353 595h1v1h-1zM422 595h1v1h-1zM457 595h1v1h-1zM492 595h1v1h-1zM527 595h1v1h-1zM597 595h1v1h-1zM632 595h1v1h-1zM667 595h1v1h-1zM702 595h1v1h-1zM772 595h1v1h-1zM807 595h1v1h-1zM842 595h1v1h-1zM877 595h1v1h-1zM947 595h1v1h-1zM982 595h1v1h-1zM1017 595h1v1h-1zM1052 595h1v1h-1zM1122 595h1v1h-1zM1157 595h1v1h-1zM1192 595h1v1h-1zM1227 595h1v1h-1zM1296 595h1v1h-1zM1331 595h1v1h-1zM1366 595h1v1h-1zM1401 595h1v1h-1zM1471 595h1v1h-1zM1506 595h1v1h-1zM1541 595h1v1h-1zM1576 595h1v1h-1zM1646 595h1v1h-1zM1681 595h1v1h-1zM1716 595h1v1h-1zM3 606h1v1h-1zM73 606h1v1h-1zM108 606h1v1h-1zM143 606h1v1h-1zM178 606h1v1h-1zM248 606h1v1h-1zM283 606h1v1h-1zM318 606h1v1h-1zM353 606h1v1h-1zM422 606h1v1h-1zM457 606h1v1h-1zM492 606h1v1h-1zM527 606h1v1h-1zM597 606h1v1h-1zM632 606h1v1h-1zM667 606h1v1h-1zM702 606h1v1h-1zM772 606h1v1h-1zM807 606h1v1h-1zM842 606h1v1h-1zM877 606h1v1h-1zM947 606h1v1h-1zM982 606h1v1h-1zM1017 606h1v1h-1zM1052 606h1v1h-1zM1122 606h1v1h-1zM1157 606h1v1h-1zM1192 606h1v1h-1zM1227 606h1v1h-1zM1296 606h1v1h-1zM1331 606h1v1h-1zM1366 606h1v1h-1zM1401 606h1v1h-1zM1471 606h1v1h-1zM1506 606h1v1h-1zM1541 606h1v1h-1zM1576 606h1v1h-1zM1646 606h1v1h-1zM1681 606h1v1h-1zM1716 606h1v1h-1zM3 618h1v1h-1zM73 618h1v1h-1zM108 618h1v1h-1zM143 618h1v1h-1zM178 618h1v1h-1zM248 618h1v1h-1zM283 618h1v1h-1zM318 618h1v1h-1zM353 618h1v1h-1zM422 618h1v1h-1zM457 618h1v1h-1zM492 618h1v1h-1zM527 618h1v1h-1zM597 618h1v1h-1zM632 618h1v1h-1zM667 618h1v1h-1zM702 618h1v1h-1zM772 618h1v1h-1zM807 618h1v1h-1zM842 618h1v1h-1zM877 618h1v1h-1zM947 618h1v1h-1zM982 618h1v1h-1zM1017 618h1v1h-1zM1052 618h1v1h-1zM1122 618h1v1h-1zM1157 618h1v1h-1zM1192 618h1v1h-1zM1227 618h1v1h-1zM1296 618h1v1h-1zM1331 618h1v1h-1zM1366 618h1v1h-1zM1401 618h1v1h-1zM1471 618h1v1h-1zM1506 618h1v1h-1zM1541 618h1v1h-1zM1576 618h1v1h-1zM1646 618h1v1h-1zM1681 618h1v1h-1zM1716 618h1v1h-1zM3 629h1v1h-1zM73 629h1v1h-1zM108 629h1v1h-1zM143 629h1v1h-1zM178 629h1v1h-1zM248 629h1v1h-1zM283 629h1v1h-1zM318 629h1v1h-1zM353 629h1v1h-1zM422 629h1v1h-1zM457 629h1v1h-1zM492 629h1v1h-1zM527 629h1v1h-1zM597 629h1v1h-1zM632 629h1v1h-1zM667 629h1v1h-1zM702 629h1v1h-1zM772 629h1v1h-1zM807 629h1v1h-1zM842 629h1v1h-1zM877 629h1v1h-1zM947 629h1v1h-1zM982 629h1v1h-1zM1017 629h1v1h-1zM1052 629h1v1h-1zM1122 629h1v1h-1zM1157 629h1v1h-1zM1192 629h1v1h-1zM1227 629h1v1h-1zM1296 629h1v1h-1zM1331 629h1v1h-1zM1366 629h1v1h-1zM1401 629h1v1h-1zM1471 629h1v1h-1zM1506 629h1v1h-1zM1541 629h1v1h-1zM1576 629h1v1h-1zM1646 629h1v1h-1zM1681 629h1v1h-1zM1716 629h1v1h-1zM3 643h1v1h-1zM73 643h1v1h-1zM108 643h1v1h-1zM143 643h1v1h-1zM178 643h1v1h-1zM248 643h1v1h-1zM283 643h1v1h-1zM318 643h1v1h-1zM353 643h1v1h-1zM422 643h1v1h-1zM457 643h1v1h-1zM492 643h1v1h-1zM527 643h1v1h-1zM597 643h1v1h-1zM632 643h1v1h-1zM667 643h1v1h-1zM702 643h1v1h-1zM772 643h1v1h-1zM807 643h1v1h-1zM842 643h1v1h-1zM877 643h1v1h-1zM947 643h1v1h-1zM982 643h1v1h-1zM1017 643h1v1h-1zM1052 643h1v1h-1zM1122 643h1v1h-1zM1157 643h1v1h-1zM1192 643h1v1h-1zM1227 643h1v1h-1zM1296 643h1v1h-1zM1331 643h1v1h-1zM1366 643h1v1h-1zM1401 643h1v1h-1zM1471 643h1v1h-1zM1506 643h1v1h-1zM1541 643h1v1h-1zM1576 643h1v1h-1zM1646 643h1v1h-1zM1681 643h1v1h-1zM1716 643h1v1h-1zM3 654h1v1h-1zM73 654h1v1h-1zM108 654h1v1h-1zM143 654h1v1h-1zM178 654h1v1h-1zM248 654h1v1h-1zM283 654h1v1h-1zM318 654h1v1h-1zM353 654h1v1h-1zM422 654h1v1h-1zM457 654h1v1h-1zM492 654h1v1h-1zM527 654h1v1h-1zM597 654h1v1h-1zM632 654h1v1h-1zM667 654h1v1h-1zM702 654h1v1h-1zM772 654h1v1h-1zM807 654h1v1h-1zM842 654h1v1h-1zM877 654h1v1h-1zM947 654h1v1h-1zM982 654h1v1h-1zM1017 654h1v1h-1zM1052 654h1v1h-1zM1122 654h1v1h-1zM1157 654h1v1h-1zM1192 654h1v1h-1zM1227 654h1v1h-1zM1296 654h1v1h-1zM1331 654h1v1h-1zM1366 654h1v1h-1zM1401 654h1v1h-1zM1471 654h1v1h-1zM1506 654h1v1h-1zM1541 654h1v1h-1zM1576 654h1v1h-1zM1646 654h1v1h-1zM1681 654h1v1h-1zM1716 654h1v1h-1zM3 666h1v1h-1zM73 666h1v1h-1zM108 666h1v1h-1zM143 666h1v1h-1zM178 666h1v1h-1zM248 666h1v1h-1zM283 666h1v1h-1zM318 666h1v1h-1zM353 666h1v1h-1zM422 666h1v1h-1zM457 666h1v1h-1zM492 666h1v1h-1zM527 666h1v1h-1zM597 666h1v1h-1zM632 666h1v1h-1zM667 666h1v1h-1zM702 666h1v1h-1zM772 666h1v1h-1zM807 666h1v1h-1zM842 666h1v1h-1zM877 666h1v1h-1zM947 666h1v1h-1zM982 666h1v1h-1zM1017 666h1v1h-1zM1052 666h1v1h-1zM1122 666h1v1h-1zM1157 666h1v1h-1zM1192 666h1v1h-1zM1227 666h1v1h-1zM1296 666h1v1h-1zM1331 666h1v1h-1zM1366 666h1v1h-1zM1401 666h1v1h-1zM1471 666h1v1h-1zM1506 666h1v1h-1zM1541 666h1v1h-1zM1576 666h1v1h-1zM1646 666h1v1h-1zM1681 666h1v1h-1zM1716 666h1v1h-1zM3 677h1v1h-1zM73 677h1v1h-1zM108 677h1v1h-1zM143 677h1v1h-1zM178 677h1v1h-1zM248 677h1v1h-1zM283 677h1v1h-1zM318 677h1v1h-1zM353 677h1v1h-1zM422 677h1v1h-1zM457 677h1v1h-1zM492 677h1v1h-1zM527 677h1v1h-1zM597 677h1v1h-1zM632 677h1v1h-1zM667 677h1v1h-1zM702 677h1v1h-1zM772 677h1v1h-1zM807 677h1v1h-1zM842 677h1v1h-1zM877 677h1v1h-1zM947 677h1v1h-1zM982 677h1v1h-1zM1017 677h1v1h-1zM1052 677h1v1h-1zM1122 677h1v1h-1zM1157 677h1v1h-1zM1192 677h1v1h-1zM1227 677h1v1h-1zM1296 677h1v1h-1zM1331 677h1v1h-1zM1366 677h1v1h-1zM1401 677h1v1h-1zM1471 677h1v1h-1zM1506 677h1v1h-1zM1541 677h1v1h-1zM1576 677h1v1h-1zM1646 677h1v1h-1zM1681 677h1v1h-1zM1716 677h1v1h-1zM3 689h1v1h-1zM73 689h1v1h-1zM108 689h1v1h-1zM143 689h1v1h-1zM178 689h1v1h-1zM248 689h1v1h-1zM283 689h1v1h-1zM318 689h1v1h-1zM353 689h1v1h-1zM422 689h1v1h-1zM457 689h1v1h-1zM492 689h1v1h-1zM527 689h1v1h-1zM597 689h1v1h-1zM632 689h1v1h-1zM667 689h1v1h-1zM702 689h1v1h-1zM772 689h1v1h-1zM807 689h1v1h-1zM842 689h1v1h-1zM877 689h1v1h-1zM947 689h1v1h-1zM982 689h1v1h-1zM1017 689h1v1h-1zM1052 689h1v1h-1zM1122 689h1v1h-1zM1157 689h1v1h-1zM1192 689h1v1h-1zM1227 689h1v1h-1zM1296 689h1v1h-1zM1331 689h1v1h-1zM1366 689h1v1h-1zM1401 689h1v1h-1zM1471 689h1v1h-1zM1506 689h1v1h-1zM1541 689h1v1h-1zM1576 689h1v1h-1zM1646 689h1v1h-1zM1681 689h1v1h-1zM1716 689h1v1h-1zM3 700h1v1h-1zM73 700h1v1h-1zM108 700h1v1h-1zM143 700h1v1h-1zM178 700h1v1h-1zM248 700h1v1h-1zM283 700h1v1h-1zM318 700h1v1h-1zM353 700h1v1h-1zM422 700h1v1h-1zM457 700h1v1h-1zM492 700h1v1h-1zM527 700h1v1h-1zM597 700h1v1h-1zM632 700h1v1h-1zM667 700h1v1h-1zM702 700h1v1h-1zM772 700h1v1h-1zM807 700h1v1h-1zM842 700h1v1h-1zM877 700h1v1h-1zM947 700h1v1h-1zM982 700h1v1h-1zM1017 700h1v1h-1zM1052 700h1v1h-1zM1122 700h1v1h-1zM1157 700h1v1h-1zM1192 700h1v1h-1zM1227 700h1v1h-1zM1296 700h1v1h-1zM1331 700h1v1h-1zM1366 700h1v1h-1zM1401 700h1v1h-1zM1471 700h1v1h-1zM1506 700h1v1h-1zM1541 700h1v1h-1zM1576 700h1v1h-1zM1646 700h1v1h-1zM1681 700h1v1h-1zM1716 700h1v1h-1zM3 712h1v1h-1zM73 712h1v1h-1zM108 712h1v1h-1zM143 712h1v1h-1zM178 712h1v1h-1zM248 712h1v1h-1zM283 712h1v1h-1zM318 712h1v1h-1zM353 712h1v1h-1zM422 712h1v1h-1zM457 712h1v1h-1zM492 712h1v1h-1zM527 712h1v1h-1zM597 712h1v1h-1zM632 712h1v1h-1zM667 712h1v1h-1zM702 712h1v1h-1zM772 712h1v1h-1zM807 712h1v1h-1zM842 712h1v1h-1zM877 712h1v1h-1zM947 712h1v1h-1zM982 712h1v1h-1zM1017 712h1v1h-1zM1052 712h1v1h-1zM1122 712h1v1h-1zM1157 712h1v1h-1zM1192 712h1v1h-1zM1227 712h1v1h-1zM1296 712h1v1h-1zM1331 712h1v1h-1zM1366 712h1v1h-1zM1401 712h1v1h-1zM1471 712h1v1h-1zM1506 712h1v1h-1zM1541 712h1v1h-1zM1576 712h1v1h-1zM1646 712h1v1h-1zM1681 712h1v1h-1zM1716 712h1v1h-1zM3 723h1v1h-1zM73 723h1v1h-1zM108 723h1v1h-1zM143 723h1v1h-1zM178 723h1v1h-1zM248 723h1v1h-1zM283 723h1v1h-1zM318 723h1v1h-1zM353 723h1v1h-1zM422 723h1v1h-1zM457 723h1v1h-1zM492 723h1v1h-1zM527 723h1v1h-1zM597 723h1v1h-1zM632 723h1v1h-1zM667 723h1v1h-1zM702 723h1v1h-1zM772 723h1v1h-1zM807 723h1v1h-1zM842 723h1v1h-1zM877 723h1v1h-1zM947 723h1v1h-1zM982 723h1v1h-1zM1017 723h1v1h-1zM1052 723h1v1h-1zM1122 723h1v1h-1zM1157 723h1v1h-1zM1192 723h1v1h-1zM1227 723h1v1h-1zM1296 723h1v1h-1zM1331 723h1v1h-1zM1366 723h1v1h-1zM1401 723h1v1h-1zM1471 723h1v1h-1zM1506 723h1v1h-1zM1541 723h1v1h-1zM1576 723h1v1h-1zM1646 723h1v1h-1zM1681 723h1v1h-1zM1716 723h1v1h-1zM3 735h1v1h-1zM73 735h1v1h-1zM108 735h1v1h-1zM143 735h1v1h-1zM178 735h1v1h-1zM248 735h1v1h-1zM283 735h1v1h-1zM318 735h1v1h-1zM353 735h1v1h-1zM422 735h1v1h-1zM457 735h1v1h-1zM492 735h1v1h-1zM527 735h1v1h-1zM597 735h1v1h-1zM632 735h1v1h-1zM667 735h1v1h-1zM702 735h1v1h-1zM772 735h1v1h-1zM807 735h1v1h-1zM842 735h1v1h-1zM877 735h1v1h-1zM947 735h1v1h-1zM982 735h1v1h-1zM1017 735h1v1h-1zM1052 735h1v1h-1zM1122 735h1v1h-1zM1157 735h1v1h-1zM1192 735h1v1h-1zM1227 735h1v1h-1zM1296 735h1v1h-1zM1331 735h1v1h-1zM1366 735h1v1h-1zM1401 735h1v1h-1zM1471 735h1v1h-1zM1506 735h1v1h-1zM1541 735h1v1h-1zM1576 735h1v1h-1zM1646 735h1v1h-1zM1681 735h1v1h-1zM1716 735h1v1h-1zM3 760h1v1h-1zM73 760h1v1h-1zM108 760h1v1h-1zM143 760h1v1h-1zM178 760h1v1h-1zM248 760h1v1h-1zM283 760h1v1h-1zM318 760h1v1h-1zM353 760h1v1h-1zM422 760h1v1h-1zM457 760h1v1h-1zM492 760h1v1h-1zM527 760h1v1h-1zM597 760h1v1h-1zM632 760h1v1h-1zM667 760h1v1h-1zM702 760h1v1h-1zM772 760h1v1h-1zM807 760h1v1h-1zM842 760h1v1h-1zM877 760h1v1h-1zM947 760h1v1h-1zM982 760h1v1h-1zM1017 760h1v1h-1zM1052 760h1v1h-1zM1122 760h1v1h-1zM1157 760h1v1h-1zM1192 760h1v1h-1zM1227 760h1v1h-1zM1296 760h1v1h-1zM1331 760h1v1h-1zM1366 760h1v1h-1zM1401 760h1v1h-1zM1471 760h1v1h-1zM1506 760h1v1h-1zM1541 760h1v1h-1zM1576 760h1v1h-1zM1646 760h1v1h-1zM1681 760h1v1h-1zM1716 760h1v1h-1zM3 771h1v1h-1zM73 771h1v1h-1zM108 771h1v1h-1zM143 771h1v1h-1zM178 771h1v1h-1zM248 771h1v1h-1zM283 771h1v1h-1zM318 771h1v1h-1zM353 771h1v1h-1zM422 771h1v1h-1zM457 771h1v1h-1zM492 771h1v1h-1zM527 771h1v1h-1zM597 771h1v1h-1zM632 771h1v1h-1zM667 771h1v1h-1zM702 771h1v1h-1zM772 771h1v1h-1zM807 771h1v1h-1zM842 771h1v1h-1zM877 771h1v1h-1zM947 771h1v1h-1zM982 771h1v1h-1zM1017 771h1v1h-1zM1052 771h1v1h-1zM1122 771h1v1h-1zM1157 771h1v1h-1zM1192 771h1v1h-1zM1227 771h1v1h-1zM1296 771h1v1h-1zM1331 771h1v1h-1zM1366 771h1v1h-1zM1401 771h1v1h-1zM1471 771h1v1h-1zM1506 771h1v1h-1zM1541 771h1v1h-1zM1576 771h1v1h-1zM1646 771h1v1h-1zM1681 771h1v1h-1zM1716 771h1v1h-1zM3 783h1v1h-1zM73 783h1v1h-1zM108 783h1v1h-1zM143 783h1v1h-1zM178 783h1v1h-1zM248 783h1v1h-1zM283 783h1v1h-1zM318 783h1v1h-1zM353 783h1v1h-1zM422 783h1v1h-1zM457 783h1v1h-1zM492 783h1v1h-1zM527 783h1v1h-1zM597 783h1v1h-1zM632 783h1v1h-1zM667 783h1v1h-1zM702 783h1v1h-1zM772 783h1v1h-1zM807 783h1v1h-1zM842 783h1v1h-1zM877 783h1v1h-1zM947 783h1v1h-1zM982 783h1v1h-1zM1017 783h1v1h-1zM1052 783h1v1h-1zM1122 783h1v1h-1zM1157 783h1v1h-1zM1192 783h1v1h-1zM1227 783h1v1h-1zM1296 783h1v1h-1zM1331 783h1v1h-1zM1366 783h1v1h-1zM1401 783h1v1h-1zM1471 783h1v1h-1zM1506 783h1v1h-1zM1541 783h1v1h-1zM1576 783h1v1h-1zM1646 783h1v1h-1zM1681 783h1v1h-1zM1716 783h1v1h-1zM3 794h1v1h-1zM73 794h1v1h-1zM108 794h1v1h-1zM143 794h1v1h-1zM178 794h1v1h-1zM248 794h1v1h-1zM283 794h1v1h-1zM318 794h1v1h-1zM353 794h1v1h-1zM422 794h1v1h-1zM457 794h1v1h-1zM492 794h1v1h-1zM527 794h1v1h-1zM597 794h1v1h-1zM632 794h1v1h-1zM667 794h1v1h-1zM702 794h1v1h-1zM772 794h1v1h-1zM807 794h1v1h-1zM842 794h1v1h-1zM877 794h1v1h-1zM947 794h1v1h-1zM982 794h1v1h-1zM1017 794h1v1h-1zM1052 794h1v1h-1zM1122 794h1v1h-1zM1157 794h1v1h-1zM1192 794h1v1h-1zM1227 794h1v1h-1zM1296 794h1v1h-1zM1331 794h1v1h-1zM1366 794h1v1h-1zM1401 794h1v1h-1zM1471 794h1v1h-1zM1506 794h1v1h-1zM1541 794h1v1h-1zM1576 794h1v1h-1zM1646 794h1v1h-1zM1681 794h1v1h-1zM1716 794h1v1h-1zM3 806h1v1h-1zM73 806h1v1h-1zM108 806h1v1h-1zM143 806h1v1h-1zM178 806h1v1h-1zM248 806h1v1h-1zM283 806h1v1h-1zM318 806h1v1h-1zM353 806h1v1h-1zM422 806h1v1h-1zM457 806h1v1h-1zM492 806h1v1h-1zM527 806h1v1h-1zM597 806h1v1h-1zM632 806h1v1h-1zM667 806h1v1h-1zM702 806h1v1h-1zM772 806h1v1h-1zM807 806h1v1h-1zM842 806h1v1h-1zM877 806h1v1h-1zM947 806h1v1h-1zM982 806h1v1h-1zM1017 806h1v1h-1zM1052 806h1v1h-1zM1122 806h1v1h-1zM1157 806h1v1h-1zM1192 806h1v1h-1zM1227 806h1v1h-1zM1296 806h1v1h-1zM1331 806h1v1h-1zM1366 806h1v1h-1zM1401 806h1v1h-1zM1471 806h1v1h-1zM1506 806h1v1h-1zM1541 806h1v1h-1zM1576 806h1v1h-1zM1646 806h1v1h-1zM1681 806h1v1h-1zM1716 806h1v1h-1zM3 817h1v1h-1zM73 817h1v1h-1zM108 817h1v1h-1zM143 817h1v1h-1zM178 817h1v1h-1zM248 817h1v1h-1zM283 817h1v1h-1zM318 817h1v1h-1zM353 817h1v1h-1zM422 817h1v1h-1zM457 817h1v1h-1zM492 817h1v1h-1zM527 817h1v1h-1zM597 817h1v1h-1zM632 817h1v1h-1zM667 817h1v1h-1zM702 817h1v1h-1zM772 817h1v1h-1zM807 817h1v1h-1zM842 817h1v1h-1zM877 817h1v1h-1zM947 817h1v1h-1zM982 817h1v1h-1zM1017 817h1v1h-1zM1052 817h1v1h-1zM1122 817h1v1h-1zM1157 817h1v1h-1zM1192 817h1v1h-1zM1227 817h1v1h-1zM1296 817h1v1h-1zM1331 817h1v1h-1zM1366 817h1v1h-1zM1401 817h1v1h-1zM1471 817h1v1h-1zM1506 817h1v1h-1zM1541 817h1v1h-1zM1576 817h1v1h-1zM1646 817h1v1h-1zM1681 817h1v1h-1zM1716 817h1v1h-1zM3 829h1v1h-1zM73 829h1v1h-1zM108 829h1v1h-1zM143 829h1v1h-1zM178 829h1v1h-1zM248 829h1v1h-1zM283 829h1v1h-1zM318 829h1v1h-1zM353 829h1v1h-1zM422 829h1v1h-1zM457 829h1v1h-1zM492 829h1v1h-1zM527 829h1v1h-1zM597 829h1v1h-1zM632 829h1v1h-1zM667 829h1v1h-1zM702 829h1v1h-1zM772 829h1v1h-1zM807 829h1v1h-1zM842 829h1v1h-1zM877 829h1v1h-1zM947 829h1v1h-1zM982 829h1v1h-1zM1017 829h1v1h-1zM1052 829h1v1h-1zM1122 829h1v1h-1zM1157 829h1v1h-1zM1192 829h1v1h-1zM1227 829h1v1h-1zM1296 829h1v1h-1zM1331 829h1v1h-1zM1366 829h1v1h-1zM1401 829h1v1h-1zM1471 829h1v1h-1zM1506 829h1v1h-1zM1541 829h1v1h-1zM1576 829h1v1h-1zM1646 829h1v1h-1zM1681 829h1v1h-1zM1716 829h1v1h-1zM3 840h1v1h-1zM73 840h1v1h-1zM108 840h1v1h-1zM143 840h1v1h-1zM178 840h1v1h-1zM248 840h1v1h-1zM283 840h1v1h-1zM318 840h1v1h-1zM353 840h1v1h-1zM422 840h1v1h-1zM457 840h1v1h-1zM492 840h1v1h-1zM527 840h1v1h-1zM597 840h1v1h-1zM632 840h1v1h-1zM667 840h1v1h-1zM702 840h1v1h-1zM772 840h1v1h-1zM807 840h1v1h-1zM842 840h1v1h-1zM877 840h1v1h-1zM947 840h1v1h-1zM982 840h1v1h-1zM1017 840h1v1h-1zM1052 840h1v1h-1zM1122 840h1v1h-1zM1157 840h1v1h-1zM1192 840h1v1h-1zM1227 840h1v1h-1zM1296 840h1v1h-1zM1331 840h1v1h-1zM1366 840h1v1h-1zM1401 840h1v1h-1zM1471 840h1v1h-1zM1506 840h1v1h-1zM1541 840h1v1h-1zM1576 840h1v1h-1zM1646 840h1v1h-1zM1681 840h1v1h-1zM1716 840h1v1h-1zM3 852h1v1h-1zM73 852h1v1h-1zM108 852h1v1h-1zM143 852h1v1h-1zM178 852h1v1h-1zM248 852h1v1h-1zM283 852h1v1h-1zM318 852h1v1h-1zM353 852h1v1h-1zM422 852h1v1h-1zM457 852h1v1h-1zM492 852h1v1h-1zM527 852h1v1h-1zM597 852h1v1h-1zM632 852h1v1h-1zM667 852h1v1h-1zM702 852h1v1h-1zM772 852h1v1h-1zM807 852h1v1h-1zM842 852h1v1h-1zM877 852h1v1h-1zM947 852h1v1h-1zM982 852h1v1h-1zM1017 852h1v1h-1zM1052 852h1v1h-1zM1122 852h1v1h-1zM1157 852h1v1h-1zM1192 852h1v1h-1zM1227 852h1v1h-1zM1296 852h1v1h-1zM1331 852h1v1h-1zM1366 852h1v1h-1zM1401 852h1v1h-1zM1471 852h1v1h-1zM1506 852h1v1h-1zM1541 852h1v1h-1zM1576 852h1v1h-1zM1646 852h1v1h-1zM1681 852h1v1h-1zM1716 852h1v1h-1zM3 876h1v1h-1zM73 876h1v1h-1zM108 876h1v1h-1zM143 876h1v1h-1zM178 876h1v1h-1zM248 876h1v1h-1zM283 876h1v1h-1zM318 876h1v1h-1zM353 876h1v1h-1zM422 876h1v1h-1zM457 876h1v1h-1zM492 876h1v1h-1zM527 876h1v1h-1zM597 876h1v1h-1zM632 876h1v1h-1zM667 876h1v1h-1zM702 876h1v1h-1zM772 876h1v1h-1zM807 876h1v1h-1zM842 876h1v1h-1zM877 876h1v1h-1zM947 876h1v1h-1zM982 876h1v1h-1zM1017 876h1v1h-1zM1052 876h1v1h-1zM1122 876h1v1h-1zM1157 876h1v1h-1zM1192 876h1v1h-1zM1227 876h1v1h-1zM1296 876h1v1h-1zM1331 876h1v1h-1zM1366 876h1v1h-1zM1401 876h1v1h-1zM1471 876h1v1h-1zM1506 876h1v1h-1zM1541 876h1v1h-1zM1576 876h1v1h-1zM1646 876h1v1h-1zM1681 876h1v1h-1zM1716 876h1v1h-1zM3 887h1v1h-1zM73 887h1v1h-1zM108 887h1v1h-1zM143 887h1v1h-1zM178 887h1v1h-1zM248 887h1v1h-1zM283 887h1v1h-1zM318 887h1v1h-1zM353 887h1v1h-1zM422 887h1v1h-1zM457 887h1v1h-1zM492 887h1v1h-1zM527 887h1v1h-1zM597 887h1v1h-1zM632 887h1v1h-1zM667 887h1v1h-1zM702 887h1v1h-1zM772 887h1v1h-1zM807 887h1v1h-1zM842 887h1v1h-1zM877 887h1v1h-1zM947 887h1v1h-1zM982 887h1v1h-1zM1017 887h1v1h-1zM1052 887h1v1h-1zM1122 887h1v1h-1zM1157 887h1v1h-1zM1192 887h1v1h-1zM1227 887h1v1h-1zM1296 887h1v1h-1zM1331 887h1v1h-1zM1366 887h1v1h-1zM1401 887h1v1h-1zM1471 887h1v1h-1zM1506 887h1v1h-1zM1541 887h1v1h-1zM1576 887h1v1h-1zM1646 887h1v1h-1zM1681 887h1v1h-1zM1716 887h1v1h-1zM3 899h1v1h-1zM73 899h1v1h-1zM108 899h1v1h-1zM143 899h1v1h-1zM178 899h1v1h-1zM248 899h1v1h-1zM283 899h1v1h-1zM318 899h1v1h-1zM353 899h1v1h-1zM422 899h1v1h-1zM457 899h1v1h-1zM492 899h1v1h-1zM527 899h1v1h-1zM597 899h1v1h-1zM632 899h1v1h-1zM667 899h1v1h-1zM702 899h1v1h-1zM772 899h1v1h-1zM807 899h1v1h-1zM842 899h1v1h-1zM877 899h1v1h-1zM947 899h1v1h-1zM982 899h1v1h-1zM1017 899h1v1h-1zM1052 899h1v1h-1zM1122 899h1v1h-1zM1157 899h1v1h-1zM1192 899h1v1h-1zM1227 899h1v1h-1zM1296 899h1v1h-1zM1331 899h1v1h-1zM1366 899h1v1h-1zM1401 899h1v1h-1zM1471 899h1v1h-1zM1506 899h1v1h-1zM1541 899h1v1h-1zM1576 899h1v1h-1zM1646 899h1v1h-1zM1681 899h1v1h-1zM1716 899h1v1h-1zM3 922h1v1h-1zM73 922h1v1h-1zM108 922h1v1h-1zM143 922h1v1h-1zM178 922h1v1h-1zM248 922h1v1h-1zM283 922h1v1h-1zM318 922h1v1h-1zM353 922h1v1h-1zM422 922h1v1h-1zM457 922h1v1h-1zM492 922h1v1h-1zM527 922h1v1h-1zM597 922h1v1h-1zM632 922h1v1h-1zM667 922h1v1h-1zM702 922h1v1h-1zM772 922h1v1h-1zM807 922h1v1h-1zM842 922h1v1h-1zM877 922h1v1h-1zM947 922h1v1h-1zM982 922h1v1h-1zM1017 922h1v1h-1zM1052 922h1v1h-1zM1122 922h1v1h-1zM1157 922h1v1h-1zM1192 922h1v1h-1zM1227 922h1v1h-1zM1296 922h1v1h-1zM1331 922h1v1h-1zM1366 922h1v1h-1zM1401 922h1v1h-1zM1471 922h1v1h-1zM1506 922h1v1h-1zM1541 922h1v1h-1zM1576 922h1v1h-1zM1646 922h1v1h-1zM1681 922h1v1h-1zM1716 922h1v1h-1zM3 934h1v1h-1zM73 934h1v1h-1zM108 934h1v1h-1zM143 934h1v1h-1zM178 934h1v1h-1zM248 934h1v1h-1zM283 934h1v1h-1zM318 934h1v1h-1zM353 934h1v1h-1zM422 934h1v1h-1zM457 934h1v1h-1zM492 934h1v1h-1zM527 934h1v1h-1zM597 934h1v1h-1zM632 934h1v1h-1zM667 934h1v1h-1zM702 934h1v1h-1zM772 934h1v1h-1zM807 934h1v1h-1zM842 934h1v1h-1zM877 934h1v1h-1zM947 934h1v1h-1zM982 934h1v1h-1zM1017 934h1v1h-1zM1052 934h1v1h-1zM1122 934h1v1h-1zM1157 934h1v1h-1zM1192 934h1v1h-1zM1227 934h1v1h-1zM1296 934h1v1h-1zM1331 934h1v1h-1zM1366 934h1v1h-1zM1401 934h1v1h-1zM1471 934h1v1h-1zM1506 934h1v1h-1zM1541 934h1v1h-1zM1576 934h1v1h-1zM1646 934h1v1h-1zM1681 934h1v1h-1zM1716 934h1v1h-1zM3 945h1v1h-1zM73 945h1v1h-1zM108 945h1v1h-1zM143 945h1v1h-1zM178 945h1v1h-1zM248 945h1v1h-1zM283 945h1v1h-1zM318 945h1v1h-1zM353 945h1v1h-1zM422 945h1v1h-1zM457 945h1v1h-1zM492 945h1v1h-1zM527 945h1v1h-1zM597 945h1v1h-1zM632 945h1v1h-1zM667 945h1v1h-1zM702 945h1v1h-1zM772 945h1v1h-1zM807 945h1v1h-1zM842 945h1v1h-1zM877 945h1v1h-1zM947 945h1v1h-1zM982 945h1v1h-1zM1017 945h1v1h-1zM1052 945h1v1h-1zM1122 945h1v1h-1zM1157 945h1v1h-1zM1192 945h1v1h-1zM1227 945h1v1h-1zM1296 945h1v1h-1zM1331 945h1v1h-1zM1366 945h1v1h-1zM1401 945h1v1h-1zM1471 945h1v1h-1zM1506 945h1v1h-1zM1541 945h1v1h-1zM1576 945h1v1h-1zM1646 945h1v1h-1zM1681 945h1v1h-1zM1716 945h1v1h-1zM3 957h1v1h-1zM73 957h1v1h-1zM108 957h1v1h-1zM143 957h1v1h-1zM178 957h1v1h-1zM248 957h1v1h-1zM283 957h1v1h-1zM318 957h1v1h-1zM353 957h1v1h-1zM422 957h1v1h-1zM457 957h1v1h-1zM492 957h1v1h-1zM527 957h1v1h-1zM597 957h1v1h-1zM632 957h1v1h-1zM667 957h1v1h-1zM702 957h1v1h-1zM772 957h1v1h-1zM807 957h1v1h-1zM842 957h1v1h-1zM877 957h1v1h-1zM947 957h1v1h-1zM982 957h1v1h-1zM1017 957h1v1h-1zM1052 957h1v1h-1zM1122 957h1v1h-1zM1157 957h1v1h-1zM1192 957h1v1h-1zM1227 957h1v1h-1zM1296 957h1v1h-1zM1331 957h1v1h-1zM1366 957h1v1h-1zM1401 957h1v1h-1zM1471 957h1v1h-1zM1506 957h1v1h-1zM1541 957h1v1h-1zM1576 957h1v1h-1zM1646 957h1v1h-1zM1681 957h1v1h-1zM1716 957h1v1h-1zM3 969h1v1h-1zM73 969h1v1h-1zM108 969h1v1h-1zM143 969h1v1h-1zM178 969h1v1h-1zM248 969h1v1h-1zM283 969h1v1h-1zM318 969h1v1h-1zM353 969h1v1h-1zM422 969h1v1h-1zM457 969h1v1h-1zM492 969h1v1h-1zM527 969h1v1h-1zM597 969h1v1h-1zM632 969h1v1h-1zM667 969h1v1h-1zM702 969h1v1h-1zM772 969h1v1h-1zM807 969h1v1h-1zM842 969h1v1h-1zM877 969h1v1h-1zM947 969h1v1h-1zM982 969h1v1h-1zM1017 969h1v1h-1zM1052 969h1v1h-1zM1122 969h1v1h-1zM1157 969h1v1h-1zM1192 969h1v1h-1zM1227 969h1v1h-1zM1296 969h1v1h-1zM1331 969h1v1h-1zM1366 969h1v1h-1zM1401 969h1v1h-1zM1471 969h1v1h-1zM1506 969h1v1h-1zM1541 969h1v1h-1zM1576 969h1v1h-1zM1646 969h1v1h-1zM1681 969h1v1h-1zM1716 969h1v1h-1zM3 980h1v1h-1zM73 980h1v1h-1zM108 980h1v1h-1zM143 980h1v1h-1zM178 980h1v1h-1zM248 980h1v1h-1zM283 980h1v1h-1zM318 980h1v1h-1zM353 980h1v1h-1zM422 980h1v1h-1zM457 980h1v1h-1zM492 980h1v1h-1zM527 980h1v1h-1zM597 980h1v1h-1zM632 980h1v1h-1zM667 980h1v1h-1zM702 980h1v1h-1zM772 980h1v1h-1zM807 980h1v1h-1zM842 980h1v1h-1zM877 980h1v1h-1zM947 980h1v1h-1zM982 980h1v1h-1zM1017 980h1v1h-1zM1052 980h1v1h-1zM1122 980h1v1h-1zM1157 980h1v1h-1zM1192 980h1v1h-1zM1227 980h1v1h-1zM1296 980h1v1h-1zM1331 980h1v1h-1zM1366 980h1v1h-1zM1401 980h1v1h-1zM1471 980h1v1h-1zM1506 980h1v1h-1zM1541 980h1v1h-1zM1576 980h1v1h-1zM1646 980h1v1h-1zM1681 980h1v1h-1zM1716 980h1v1h-1zM3 992h1v1h-1zM73 992h1v1h-1zM108 992h1v1h-1zM143 992h1v1h-1zM178 992h1v1h-1zM248 992h1v1h-1zM283 992h1v1h-1zM318 992h1v1h-1zM353 992h1v1h-1zM422 992h1v1h-1zM457 992h1v1h-1zM492 992h1v1h-1zM527 992h1v1h-1zM597 992h1v1h-1zM632 992h1v1h-1zM667 992h1v1h-1zM702 992h1v1h-1zM772 992h1v1h-1zM807 992h1v1h-1zM842 992h1v1h-1zM877 992h1v1h-1zM947 992h1v1h-1zM982 992h1v1h-1zM1017 992h1v1h-1zM1052 992h1v1h-1zM1122 992h1v1h-1zM1157 992h1v1h-1zM1192 992h1v1h-1zM1227 992h1v1h-1zM1296 992h1v1h-1zM1331 992h1v1h-1zM1366 992h1v1h-1zM1401 992h1v1h-1zM1471 992h1v1h-1zM1506 992h1v1h-1zM1541 992h1v1h-1zM1576 992h1v1h-1zM1646 992h1v1h-1zM1681 992h1v1h-1zM1716 992h1v1h-1zM3 58h1v1h-1zM38 58h1v1h-1zM73 58h1v1h-1zM108 58h1v1h-1zM143 58h1v1h-1zM178 58h1v1h-1zM248 58h1v1h-1zM283 58h1v1h-1zM318 58h1v1h-1zM353 58h1v1h-1zM422 58h1v1h-1zM457 58h1v1h-1zM492 58h1v1h-1zM527 58h1v1h-1zM597 58h1v1h-1zM632 58h1v1h-1zM667 58h1v1h-1zM702 58h1v1h-1zM772 58h1v1h-1zM807 58h1v1h-1zM842 58h1v1h-1zM877 58h1v1h-1zM947 58h1v1h-1zM982 58h1v1h-1zM1017 58h1v1h-1zM1052 58h1v1h-1zM1122 58h1v1h-1zM1157 58h1v1h-1zM1192 58h1v1h-1zM1227 58h1v1h-1zM1296 58h1v1h-1zM1331 58h1v1h-1zM1366 58h1v1h-1zM1401 58h1v1h-1zM1471 58h1v1h-1zM1506 58h1v1h-1zM1541 58h1v1h-1zM1576 58h1v1h-1zM1646 58h1v1h-1zM1681 58h1v1h-1zM1716 58h1v1h-1z" fill="#4c4c4c"/><line x1="213.5" y1="58" x2="213.5" y2="993" stroke="#484848" stroke-width="1" stroke-dasharray="1 1 1 1 1 2"/><line x1="388.5" y1="58" x2="388.5" y2="993" stroke="#484848" stroke-width="1" stroke-dasharray="1 1 1 1 1 2"/><line x1="562.5" y1="58" x2="562.5" y2="993" stroke="#484848" stroke-width="1" stroke-dasharray="1 1 1 1 1 2"/><line x1="737.5" y1="58" x2="737.5" y2="993" stroke="#484848" stroke-width="1" stroke-dasharray="1 1 1 1 1 2"/><line x1="912.5" y1="58" x2="912.5" y2="993" stroke="#484848" stroke-width="1" stroke-dasharray="1 1 1 1 1 2"/><line x1="1087.5" y1="58" x2="1087.5" y2="993" stroke="#484848" stroke-width="1" stroke-dasharray="1 1 1 1 1 2"/><line x1="1262.5" y1="58" x2="1262.5" y2="993" stroke="#484848" stroke-width="1" stroke-dasharray="1 1 1 1 1 2"/><line x1="1436.5" y1="58" x2="1436.5" y2="993" stroke="#484848" stroke-width="1" stroke-dasharray="1 1 1 1 1 2"/><line x1="1611.5" y1="58" x2="1611.5" y2="993" stroke="#484848" stroke-width="1" stroke-dasharray="1 1 1 1 1 2"/><line x1="38.5" y1="59" x2="38.5" y2="993" stroke="#3a3a3a" stroke-width="1.2" stroke-dasharray="5 5"/><defs><clipPath id="cs0"><rect x="3" y="58" width="1748" height="116"/></clipPath><clipPath id="cs1"><rect x="3" y="175" width="1748" height="116"/></clipPath><clipPath id="cs2"><rect x="3" y="292" width="1748" height="116"/></clipPath><clipPath id="cs3"><rect x="3" y="409" width="1748" height="116"/></clipPath><clipPath id="cs4"><rect x="3" y="526" width="1748" height="116"/></clipPath><clipPath id="cs5"><rect x="3" y="643" width="1748" height="116"/></clipPath><clipPath id="cs6"><rect x="3" y="760" width="1748" height="116"/></clipPath><clipPath id="cs7"><rect x="3" y="877" width="1748" height="116"/></clipPath></defs><g clip-path="url(#cs2)"><polyline points="3.00,349.70 37.50,349.70 38.20,332.20 38.60,366.00 39.00,345.00 40.00,352.00 41.50,349.50 44.50,351.00 46.00,349.00 48.30,347.40 49.00,352.00 50.00,350.00 52.00,351.00 53.00,354.00 55.00,356.50 57.00,355.00 60.00,350.50 63.00,349.00 65.00,351.00 69.00,351.50 80.00,351.30 160.00,350.50 324.00,350.50 324.50,344.00 325.00,355.00 325.50,348.70 480.00,349.00 1450.00,349.50 1450.00,347.50 1451.50,346.00 1454.00,347.00 1456.50,349.50 1459.00,349.50 1459.50,353.00 1460.00,345.50 1460.50,353.00 1461.00,351.50 1465.00,352.30 1469.50,352.30 1470.00,351.50 1474.50,351.50 1475.00,348.50 1476.00,352.50 1478.00,350.00 1480.00,348.50 1482.00,347.50 1485.00,347.00 1486.00,346.30 1492.50,346.30 1495.00,349.50 1496.00,351.50 1498.00,351.50 1500.00,350.50 1503.00,350.00 1508.00,349.70 1751.00,349.70" fill="none" stroke="#e3204c" stroke-width="1.3" stroke-linejoin="round" /></g><g clip-path="url(#cs4)"><polyline points="3.00,583.30 1751.00,583.30" fill="none" stroke="#f5961e" stroke-width="1.6" stroke-linejoin="round" /></g><line x1="-4" y1="161.5" x2="1751" y2="161.5" stroke="#484848" stroke-width="1.15" stroke-dasharray="5 5"/><line x1="-4" y1="246.5" x2="1751" y2="246.5" stroke="#484848" stroke-width="1.15" stroke-dasharray="5 5"/><line x1="-4" y1="349.5" x2="1751" y2="349.5" stroke="#484848" stroke-width="1.15" stroke-dasharray="5 5"/><line x1="-4" y1="478.5" x2="1751" y2="478.5" stroke="#484848" stroke-width="1.15" stroke-dasharray="5 5"/><line x1="-4" y1="583.5" x2="1751" y2="583.5" stroke="#484848" stroke-width="1.15" stroke-dasharray="5 5"/><line x1="-4" y1="746.5" x2="1751" y2="746.5" stroke="#484848" stroke-width="1.15" stroke-dasharray="5 5"/><line x1="-4" y1="863.5" x2="1751" y2="863.5" stroke="#484848" stroke-width="1.15" stroke-dasharray="5 5"/><line x1="-4" y1="911.5" x2="1751" y2="911.5" stroke="#484848" stroke-width="1.15" stroke-dasharray="5 5"/><rect x="1713.2" y="84.5" width="37.8" height="17" fill="#fff"/><rect x="1713.2" y="107.5" width="37.8" height="17" fill="#fff"/><rect x="1713.2" y="130.5" width="37.8" height="17" fill="#fff"/><rect x="1720.7" y="153.5" width="30.3" height="17" fill="#fff"/><rect x="1702.0" y="181.5" width="49.0" height="17" fill="#fff"/><rect x="1694.5" y="204.5" width="56.5" height="17" fill="#fff"/><rect x="1694.5" y="227.5" width="56.5" height="17" fill="#fff"/><rect x="1690.0" y="250.5" width="61.0" height="17" fill="#fff"/><rect x="1690.0" y="273.5" width="61.0" height="17" fill="#fff"/><rect x="1702.0" y="295.7" width="49.0" height="17" fill="#fff"/><rect x="1694.5" y="318.7" width="56.5" height="17" fill="#fff"/><rect x="1720.7" y="341.5" width="30.3" height="17" fill="#fff"/><rect x="1690.0" y="364.5" width="61.0" height="17" fill="#fff"/><rect x="1697.5" y="387.5" width="53.5" height="17" fill="#fff"/><rect x="1720.7" y="412.5" width="30.3" height="17" fill="#fff"/><rect x="1694.5" y="435.5" width="56.5" height="17" fill="#fff"/><rect x="1694.5" y="458.5" width="56.5" height="17" fill="#fff"/><rect x="1690.0" y="481.5" width="61.0" height="17" fill="#fff"/><rect x="1690.0" y="504.5" width="61.0" height="17" fill="#fff"/><rect x="1720.7" y="529.8" width="30.3" height="17" fill="#fff"/><rect x="1720.7" y="552.5" width="30.3" height="17" fill="#fff"/><rect x="1720.7" y="575.5" width="30.3" height="17" fill="#fff"/><rect x="1716.2" y="598.7" width="34.8" height="17" fill="#fff"/><rect x="1716.2" y="621.5" width="34.8" height="17" fill="#fff"/><rect x="1720.7" y="646.5" width="30.3" height="17" fill="#fff"/><rect x="1702.0" y="669.5" width="49.0" height="17" fill="#fff"/><rect x="1720.7" y="692.5" width="30.3" height="17" fill="#fff"/><rect x="1702.0" y="715.5" width="49.0" height="17" fill="#fff"/><rect x="1720.7" y="738.3" width="30.3" height="17" fill="#fff"/><rect x="1669.0" y="763.7" width="82.0" height="17" fill="#fff"/><rect x="1669.0" y="786.5" width="82.0" height="17" fill="#fff"/><rect x="1669.0" y="809.5" width="82.0" height="17" fill="#fff"/><rect x="1669.0" y="832.5" width="82.0" height="17" fill="#fff"/><rect x="1721.7" y="855.5" width="29.3" height="17" fill="#fff"/><rect x="1680.2" y="879.6" width="70.8" height="17" fill="#fff"/><rect x="1721.5" y="902.9" width="29.5" height="17" fill="#fff"/><rect x="1675.7" y="926.8" width="75.3" height="17" fill="#fff"/><rect x="1660.7" y="949.6" width="90.3" height="17" fill="#fff"/><rect x="1660.7" y="972.4" width="90.3" height="17" fill="#fff"/><rect x="26.4" y="977" width="24.0" height="15" fill="#fff"/><rect x="195.6" y="977" width="35.3" height="15" fill="#fff"/><rect x="370.4" y="977" width="35.3" height="15" fill="#fff"/><rect x="541.4" y="977" width="42.8" height="15" fill="#fff"/><rect x="716.2" y="977" width="42.8" height="15" fill="#fff"/><rect x="891.0" y="977" width="42.8" height="15" fill="#fff"/><rect x="1065.8" y="977" width="42.8" height="15" fill="#fff"/><rect x="1240.6" y="977" width="42.8" height="15" fill="#fff"/><rect x="1415.4" y="977" width="42.8" height="15" fill="#fff"/><rect x="1590.2" y="977" width="42.8" height="15" fill="#fff"/><g clip-path="url(#cs2)"><polyline points="1690.00,349.70 1751.00,349.70" fill="none" stroke="#e3204c" stroke-width="1.3" stroke-linejoin="round" /></g><g clip-path="url(#cs4)"><polyline points="1690.00,583.30 1751.00,583.30" fill="none" stroke="#f5961e" stroke-width="1.6" stroke-linejoin="round" /></g><g clip-path="url(#cs0)"><polyline points="3.00,161.30 36.50,161.30 38.40,158.50 39.00,163.00 40.00,165.00 40.50,169.50 42.00,171.30 43.30,169.00 48.50,163.00 50.40,159.30 52.50,156.00 55.00,151.00 57.00,148.00 57.70,145.00 59.50,144.00 61.00,142.20 63.50,142.20 65.00,144.30 67.50,144.30 74.50,152.00 76.00,155.00 79.00,157.00 82.00,157.30 83.50,152.50 84.50,149.50 86.00,148.30 90.00,148.30 92.00,146.00 93.00,146.30 95.00,145.30 98.00,145.30 99.00,144.30 102.00,144.30 103.00,143.30 107.50,143.30 109.00,142.20 125.00,140.00 147.50,137.50 157.00,137.50 162.50,143.50 175.00,141.90 184.00,140.60 187.50,143.50 193.75,141.25 200.00,144.40 206.00,144.40 210.00,143.00 230.00,142.00 270.00,139.25 300.00,135.00 320.00,133.00 325.00,131.50 332.50,132.50 340.00,130.00 380.00,128.75 415.00,128.00 440.00,130.50 480.00,133.00 530.00,135.75 570.00,138.00 610.00,140.00 660.00,143.00 710.00,147.00 740.00,149.50 800.00,153.00 870.00,155.00 960.00,155.75 1100.00,156.50 1180.00,157.50 1420.00,158.40 1449.00,158.40 1450.30,160.00 1451.00,163.75 1451.60,168.10 1453.40,170.30 1455.60,167.50 1458.75,165.30 1460.60,161.90 1465.00,156.25 1466.60,151.90 1469.40,147.80 1472.80,146.40 1476.60,147.20 1481.25,151.60 1484.40,155.60 1487.50,160.90 1492.80,167.20 1494.70,162.50 1495.90,160.50 1500.30,160.50 1501.00,158.75 1751.00,159.30" fill="none" stroke="#111111" stroke-width="1.4" stroke-linejoin="round" /></g><g clip-path="url(#cs1)"><polyline points="3.00,246.30 38.00,246.30 38.50,212.00 39.00,222.50 83.00,223.00 213.00,226.00 285.00,226.75 325.00,227.00 325.00,220.00 325.50,234.00 326.00,227.30 340.00,227.70 341.00,224.00 341.50,230.00 342.00,227.80 410.00,229.30 480.00,230.30 690.00,233.70 960.00,239.50 988.00,239.80 988.50,236.00 989.00,242.00 989.50,239.90 1200.00,242.50 1440.00,246.80 1448.00,247.00 1448.50,241.00 1449.00,251.00 1449.50,247.00 1600.00,249.50 1751.00,250.80" fill="none" stroke="#1ec0d0" stroke-width="1.4" stroke-linejoin="round" /></g><g clip-path="url(#cs3)"><polyline points="3.00,477.40 140.00,477.50 164.40,476.00 186.90,473.75 200.00,470.00 205.60,467.20 213.10,461.60 230.00,452.75 248.75,445.60 267.50,441.50 280.60,438.50 321.90,438.50 342.50,441.00 357.50,445.60 374.40,453.10 389.40,459.70 408.10,467.20 430.60,472.25 455.00,475.25 492.50,477.10 1751.00,477.40" fill="none" stroke="#78c832" stroke-width="1.4" stroke-linejoin="round" /></g><g clip-path="url(#cs5)"><polyline points="3.00,745.50 23.75,743.75 37.50,742.00 38.40,742.00 38.40,654.40 1751.00,654.40" fill="none" stroke="#2222b8" stroke-width="1.4" stroke-linejoin="round" /></g><g clip-path="url(#cs6)"><polyline points="3.00,771.25 23.50,771.25 24.00,772.00 37.50,772.00 39.00,770.00 42.50,760.00 43.50,758.00" fill="none" stroke="#f0901e" stroke-width="1.4" stroke-linejoin="round" /></g><g clip-path="url(#cs7)"><polyline points="3.00,889.60 37.00,889.60 38.50,887.90 39.50,892.00 42.00,878.50 45.00,881.25 49.00,885.40 53.00,893.30 57.00,901.70 62.00,903.30 67.00,901.25 74.00,891.70 82.00,884.60 85.00,891.25 88.00,890.00 93.00,892.50 135.00,893.40 156.00,893.00 158.40,891.60 161.25,886.50 164.00,885.40 175.30,885.00 178.00,883.50 183.00,883.50 183.75,884.60 188.40,880.30 194.00,880.30 196.00,881.25 199.70,878.40 202.50,877.10 205.30,876.60 212.00,872.00 292.00,872.00 298.00,877.00 305.60,877.90 318.75,879.00 324.40,882.20 330.00,882.20 331.90,881.25 337.50,883.10 343.10,886.00 358.00,888.75 388.00,894.40 420.00,899.60 438.75,901.30 480.00,903.20 720.00,910.00 960.00,919.25 1200.00,924.25 1420.00,927.50 1449.00,928.40 1450.50,927.00 1451.00,922.50 1452.00,919.00 1453.00,916.50 1459.00,922.50 1461.00,926.00 1464.00,929.00 1467.00,933.50 1469.00,937.00 1471.00,939.00 1474.00,940.00 1476.00,938.50 1478.00,938.00 1481.00,934.00 1484.00,930.00 1492.00,921.50 1493.50,920.50 1494.50,926.00 1497.00,928.50 1499.00,927.50 1500.50,929.30 1524.00,929.30 1527.00,930.30 1600.00,931.25 1751.00,934.50" fill="none" stroke="#6c2a92" stroke-width="1.6" stroke-linejoin="round" /></g><rect x="3" y="173" width="1748" height="2" fill="#5a5a5a"/><rect x="3" y="290" width="1748" height="2" fill="#5a5a5a"/><rect x="3" y="407" width="1748" height="2" fill="#5a5a5a"/><rect x="3" y="524" width="1748" height="2" fill="#5a5a5a"/><rect x="3" y="641" width="1748" height="2" fill="#5a5a5a"/><rect x="3" y="758" width="1748" height="2" fill="#5a5a5a"/><rect x="3" y="875" width="1748" height="2" fill="#5a5a5a"/><path d="M28.5 58 L48.5 58 L38.5 68.5 Z" fill="#f28c22"/><path d="M1710 64.5 L1743 64.5 Q1747 64.5 1747 68.5 L1747 98 Z" fill="#4d4d4d" stroke="#111" stroke-width="1.5" stroke-linejoin="round"/><circle cx="1737" cy="71.5" r="4.2" fill="none" stroke="#999" stroke-width="1.6"/><line x1="1734" y1="74.5" x2="1728.5" y2="80" stroke="#999" stroke-width="2.2" stroke-linecap="round"/><path d="M1730.5 700.5 L1741 690.8 L1741 710.2 Z" fill="#2424c0"/><rect x="1740" y="699" width="11" height="3.2" fill="#2424c0"/><path d="M29.5 644.5 h17 v19 h-5 l-3 6.5 l-3 -6.5 h-6 z" fill="#000" stroke="#f28c22" stroke-width="2"/><path d="M9.5 103.4 L77.5 103.4 L84.0 115.4 L77.5 127.4 L9.5 127.4 Q6.5 127.4 6.5 124.4 L6.5 106.4 Q6.5 103.4 9.5 103.4 Z" fill="#e6e6e6" stroke="#222" stroke-width="2" stroke-linejoin="round"/><line x1="33.0" y1="103.4" x2="33.0" y2="127.4" stroke="#222" stroke-width="2"/><path d="M9.5 220.4 L77.5 220.4 L84.0 232.15 L77.5 243.9 L9.5 243.9 Q6.5 243.9 6.5 240.9 L6.5 223.4 Q6.5 220.4 9.5 220.4 Z" fill="#e6f6f8" stroke="#22bccc" stroke-width="2" stroke-linejoin="round"/><line x1="33.0" y1="220.4" x2="33.0" y2="243.9" stroke="#22bccc" stroke-width="2"/><path d="M10.5 337.5 L33.0 337.5 L42.0 350.0 L33.0 362.5 L10.5 362.5 Q6.5 362.5 6.5 358.5 L6.5 341.5 Q6.5 337.5 10.5 337.5 Z" fill="#fce6ea" stroke="#e3284c" stroke-width="1.6" stroke-linejoin="round"/><path d="M9.5 454.3 L77.5 454.3 L84.0 466.35 L77.5 478.40000000000003 L9.5 478.40000000000003 Q6.5 478.40000000000003 6.5 475.40000000000003 L6.5 457.3 Q6.5 454.3 9.5 454.3 Z" fill="#f0f6e8" stroke="#78c832" stroke-width="2" stroke-linejoin="round"/><line x1="33.0" y1="454.3" x2="33.0" y2="478.40000000000003" stroke="#78c832" stroke-width="2"/><path d="M10.5 571.5 L33.0 571.5 L42.0 583.75 L33.0 596.0 L10.5 596.0 Q6.5 596.0 6.5 592.0 L6.5 575.5 Q6.5 571.5 10.5 571.5 Z" fill="#fff0e2" stroke="#f5a050" stroke-width="1.6" stroke-linejoin="round"/><path d="M9.5 688.7 L77.5 688.7 L84.0 700.25 L77.5 711.8000000000001 L9.5 711.8000000000001 Q6.5 711.8000000000001 6.5 708.8000000000001 L6.5 691.7 Q6.5 688.7 9.5 688.7 Z" fill="#e8e8f8" stroke="#2828c0" stroke-width="2" stroke-linejoin="round"/><line x1="33.0" y1="688.7" x2="33.0" y2="711.8000000000001" stroke="#2828c0" stroke-width="2"/><g clip-path="url(#cs6)"><path d="M10.5 851.3 L33.0 851.3 L42.0 863.55 L33.0 875.8 L10.5 875.8 Q6.5 875.8 6.5 871.8 L6.5 855.3 Q6.5 851.3 10.5 851.3 Z" fill="#fdf0e4" stroke="#f0a040" stroke-width="1.6" stroke-linejoin="round"/></g><path d="M10.5 898.3 L33.0 898.3 L42.0 910.8 L33.0 923.3 L10.5 923.3 Q6.5 923.3 6.5 919.3 L6.5 902.3 Q6.5 898.3 10.5 898.3 Z" fill="#6c2a8a" stroke="#2a1030" stroke-width="1.6" stroke-linejoin="round"/></svg><div class="t" style="left:10.80px;top:108.64px;font-size:12px;line-height:12px;color:#222;font-weight:normal;-webkit-text-stroke:0.25px currentColor;">C 1</div><div class="t" style="left:44.80px;top:108.64px;font-size:12px;line-height:12px;color:#222;font-weight:normal;-webkit-text-stroke:0.25px currentColor;">20 V</div><div class="t" style="left:101.70px;top:104.37px;font-size:20px;line-height:20px;color:#111;font-weight:normal;-webkit-text-stroke:0.35px #111;">U<span style="display:inline-block;width:8.3px;overflow:visible;position:relative;top:-1.8px"><span style="display:inline-block;transform:scaleX(0.75);transform-origin:0 0">_</span></span>loop,coil</div><div class="t" style="left:10.80px;top:225.34px;font-size:12px;line-height:12px;color:#111;font-weight:normal;-webkit-text-stroke:0.25px currentColor;">C 2</div><div class="t" style="left:35.80px;top:225.34px;font-size:12px;line-height:12px;color:#111;font-weight:normal;-webkit-text-stroke:0.25px currentColor;">300 mV</div><div class="t" style="left:101.50px;top:221.17px;font-size:20px;line-height:20px;color:#1ec0d0;font-weight:normal;-webkit-text-stroke:0.35px #1ec0d0;text-shadow:-0.7px 0.7px 0.4px rgba(0,0,0,0.6);">U<span style="display:inline-block;width:8.3px;overflow:visible;position:relative;top:-1.8px"><span style="display:inline-block;transform:scaleX(0.75);transform-origin:0 0">_</span></span>Bt,coil</div><div class="t" style="left:15.00px;top:344.34px;font-size:12px;line-height:12px;color:#ec6c84;font-weight:normal;-webkit-text-stroke:0.25px currentColor;">C 3</div><div class="t" style="left:54.00px;top:338.47px;font-size:20px;line-height:20px;color:#e3204c;font-weight:normal;-webkit-text-stroke:0.35px #e3204c;text-shadow:-0.7px 0.7px 0.4px rgba(0,0,0,0.7);">U<span style="display:inline-block;width:8.3px;overflow:visible;position:relative;top:-1.8px"><span style="display:inline-block;transform:scaleX(0.75);transform-origin:0 0">_</span></span>Rog,coil</div><div class="t" style="left:10.80px;top:459.84px;font-size:12px;line-height:12px;color:#111;font-weight:normal;-webkit-text-stroke:0.25px currentColor;">C 4</div><div class="t" style="left:35.80px;top:459.84px;font-size:12px;line-height:12px;color:#111;font-weight:normal;-webkit-text-stroke:0.25px currentColor;">200 mV</div><div class="t" style="left:102.60px;top:455.67px;font-size:20px;line-height:20px;color:#78c832;font-weight:normal;-webkit-text-stroke:0.35px #78c832;text-shadow:-0.7px 0.7px 0.4px rgba(0,0,0,0.6);">U<span style="display:inline-block;width:8.3px;overflow:visible;position:relative;top:-1.8px"><span style="display:inline-block;transform:scaleX(0.75);transform-origin:0 0">_</span></span>Photod</div><div class="t" style="left:15.00px;top:577.84px;font-size:12px;line-height:12px;color:#111;font-weight:normal;-webkit-text-stroke:0.25px currentColor;">C 5</div><div class="t" style="left:53.80px;top:572.47px;font-size:20px;line-height:20px;color:#f5961e;font-weight:normal;-webkit-text-stroke:0.35px #f5961e;text-shadow:-0.7px 0.7px 0.4px rgba(0,0,0,0.6);">U<span style="display:inline-block;width:8.3px;overflow:visible;position:relative;top:-1.8px"><span style="display:inline-block;transform:scaleX(0.75);transform-origin:0 0">_</span></span>Diamagn</div><div class="t" style="left:10.80px;top:694.84px;font-size:12px;line-height:12px;color:#2828c0;font-weight:normal;-webkit-text-stroke:0.25px currentColor;">C 6</div><div class="t" style="left:47.80px;top:694.84px;font-size:12px;line-height:12px;color:#2828c0;font-weight:normal;-webkit-text-stroke:0.25px currentColor;">3 V</div><div class="t" style="left:101.10px;top:689.37px;font-size:20px;line-height:20px;color:#1e1ea0;font-weight:normal;-webkit-text-stroke:0.35px #1e1ea0;">Trigger</div><div class="t" style="left:13.50px;top:856.22px;font-size:12.5px;line-height:12.5px;color:#111;font-weight:normal;-webkit-text-stroke:0.25px currentColor;">M 1</div><div class="t" style="left:54.20px;top:848.77px;font-size:20px;line-height:20px;color:#f0901e;font-weight:normal;-webkit-text-stroke:0.35px #f0901e;text-shadow:-0.7px 0.7px 0.4px rgba(0,0,0,0.6);">B<span style="display:inline-block;width:8.3px;overflow:visible;position:relative;top:-1.8px"><span style="display:inline-block;transform:scaleX(0.75);transform-origin:0 0">_</span></span>t</div><div class="t" style="left:13.50px;top:904.62px;font-size:12.5px;line-height:12.5px;color:#fff;font-weight:normal;-webkit-text-stroke:0.25px currentColor;">M 2</div><div class="t" style="left:54.00px;top:899.37px;font-size:20px;line-height:20px;color:#6c2a92;font-weight:normal;-webkit-text-stroke:0.35px #6c2a92;text-shadow:-0.7px 0.7px 0.4px rgba(0,0,0,0.5);">I<span style="display:inline-block;width:8.3px;overflow:visible;position:relative;top:-1.8px"><span style="display:inline-block;transform:scaleX(0.75);transform-origin:0 0">_</span></span>p</div><div class="t" style="left:-161.60px;width:400px;text-align:center;top:647.65px;font-size:14px;line-height:14px;color:#f6a64e;font-weight:bold;">T</div><div class="t" style="right:173.00px;top:86.17px;font-size:13.5px;line-height:13.5px;color:#111111;font-weight:normal;text-shadow:-0.7px 0.7px 0.3px rgba(0,0,0,.8),0 0 2px #fff,0 0 2px #fff;">30 V</div><div class="t" style="right:173.00px;top:109.17px;font-size:13.5px;line-height:13.5px;color:#111111;font-weight:normal;text-shadow:-0.7px 0.7px 0.3px rgba(0,0,0,.8),0 0 2px #fff,0 0 2px #fff;">20 V</div><div class="t" style="right:173.00px;top:132.17px;font-size:13.5px;line-height:13.5px;color:#111111;font-weight:normal;text-shadow:-0.7px 0.7px 0.3px rgba(0,0,0,.8),0 0 2px #fff,0 0 2px #fff;">10 V</div><div class="t" style="right:173.00px;top:155.17px;font-size:13.5px;line-height:13.5px;color:#111111;font-weight:normal;text-shadow:-0.7px 0.7px 0.3px rgba(0,0,0,.8),0 0 2px #fff,0 0 2px #fff;">0 V</div><div class="t" style="right:173.00px;top:183.17px;font-size:13.5px;line-height:13.5px;color:#1ec0d0;font-weight:normal;text-shadow:-0.7px 0.7px 0.3px rgba(0,0,0,.8),0 0 2px #fff,0 0 2px #fff;">1.25 V</div><div class="t" style="right:173.00px;top:206.17px;font-size:13.5px;line-height:13.5px;color:#1ec0d0;font-weight:normal;text-shadow:-0.7px 0.7px 0.3px rgba(0,0,0,.8),0 0 2px #fff,0 0 2px #fff;">750 mV</div><div class="t" style="right:173.00px;top:229.17px;font-size:13.5px;line-height:13.5px;color:#1ec0d0;font-weight:normal;text-shadow:-0.7px 0.7px 0.3px rgba(0,0,0,.8),0 0 2px #fff,0 0 2px #fff;">250 mV</div><div class="t" style="right:173.00px;top:252.17px;font-size:13.5px;line-height:13.5px;color:#1ec0d0;font-weight:normal;text-shadow:-0.7px 0.7px 0.3px rgba(0,0,0,.8),0 0 2px #fff,0 0 2px #fff;">-250 mV</div><div class="t" style="right:173.00px;top:275.17px;font-size:13.5px;line-height:13.5px;color:#1ec0d0;font-weight:normal;text-shadow:-0.7px 0.7px 0.3px rgba(0,0,0,.8),0 0 2px #fff,0 0 2px #fff;">-750 mV</div><div class="t" style="right:173.00px;top:297.37px;font-size:13.5px;line-height:13.5px;color:#e3204c;font-weight:normal;text-shadow:-0.7px 0.7px 0.3px rgba(0,0,0,.8),0 0 2px #fff,0 0 2px #fff;">1.80 V</div><div class="t" style="right:173.00px;top:320.37px;font-size:13.5px;line-height:13.5px;color:#e3204c;font-weight:normal;text-shadow:-0.7px 0.7px 0.3px rgba(0,0,0,.8),0 0 2px #fff,0 0 2px #fff;">900 mV</div><div class="t" style="right:173.00px;top:343.17px;font-size:13.5px;line-height:13.5px;color:#e3204c;font-weight:normal;text-shadow:-0.7px 0.7px 0.3px rgba(0,0,0,.8),0 0 2px #fff,0 0 2px #fff;">0 V</div><div class="t" style="right:173.00px;top:366.17px;font-size:13.5px;line-height:13.5px;color:#e3204c;font-weight:normal;text-shadow:-0.7px 0.7px 0.3px rgba(0,0,0,.8),0 0 2px #fff,0 0 2px #fff;">-900 mV</div><div class="t" style="right:173.00px;top:389.17px;font-size:13.5px;line-height:13.5px;color:#e3204c;font-weight:normal;text-shadow:-0.7px 0.7px 0.3px rgba(0,0,0,.8),0 0 2px #fff,0 0 2px #fff;">-1.80 V</div><div class="t" style="right:173.00px;top:414.17px;font-size:13.5px;line-height:13.5px;color:#78c832;font-weight:normal;text-shadow:-0.7px 0.7px 0.3px rgba(0,0,0,.8),0 0 2px #fff,0 0 2px #fff;">1 V</div><div class="t" style="right:173.00px;top:437.17px;font-size:13.5px;line-height:13.5px;color:#78c832;font-weight:normal;text-shadow:-0.7px 0.7px 0.3px rgba(0,0,0,.8),0 0 2px #fff,0 0 2px #fff;">600 mV</div><div class="t" style="right:173.00px;top:460.17px;font-size:13.5px;line-height:13.5px;color:#78c832;font-weight:normal;text-shadow:-0.7px 0.7px 0.3px rgba(0,0,0,.8),0 0 2px #fff,0 0 2px #fff;">200 mV</div><div class="t" style="right:173.00px;top:483.17px;font-size:13.5px;line-height:13.5px;color:#78c832;font-weight:normal;text-shadow:-0.7px 0.7px 0.3px rgba(0,0,0,.8),0 0 2px #fff,0 0 2px #fff;">-200 mV</div><div class="t" style="right:173.00px;top:506.17px;font-size:13.5px;line-height:13.5px;color:#78c832;font-weight:normal;text-shadow:-0.7px 0.7px 0.3px rgba(0,0,0,.8),0 0 2px #fff,0 0 2px #fff;">-600 mV</div><div class="t" style="right:173.00px;top:531.47px;font-size:13.5px;line-height:13.5px;color:#f5961e;font-weight:normal;text-shadow:-0.7px 0.7px 0.3px rgba(0,0,0,.8),0 0 2px #fff,0 0 2px #fff;">4 V</div><div class="t" style="right:173.00px;top:554.17px;font-size:13.5px;line-height:13.5px;color:#f5961e;font-weight:normal;text-shadow:-0.7px 0.7px 0.3px rgba(0,0,0,.8),0 0 2px #fff,0 0 2px #fff;">2 V</div><div class="t" style="right:173.00px;top:577.17px;font-size:13.5px;line-height:13.5px;color:#f5961e;font-weight:normal;text-shadow:-0.7px 0.7px 0.3px rgba(0,0,0,.8),0 0 2px #fff,0 0 2px #fff;">0 V</div><div class="t" style="right:173.00px;top:600.37px;font-size:13.5px;line-height:13.5px;color:#f5961e;font-weight:normal;text-shadow:-0.7px 0.7px 0.3px rgba(0,0,0,.8),0 0 2px #fff,0 0 2px #fff;">-2 V</div><div class="t" style="right:173.00px;top:623.17px;font-size:13.5px;line-height:13.5px;color:#f5961e;font-weight:normal;text-shadow:-0.7px 0.7px 0.3px rgba(0,0,0,.8),0 0 2px #fff,0 0 2px #fff;">-4 V</div><div class="t" style="right:173.00px;top:648.17px;font-size:13.5px;line-height:13.5px;color:#2222b8;font-weight:normal;text-shadow:-0.7px 0.7px 0.3px rgba(0,0,0,.8),0 0 2px #fff,0 0 2px #fff;">6 V</div><div class="t" style="right:173.00px;top:671.17px;font-size:13.5px;line-height:13.5px;color:#2222b8;font-weight:normal;text-shadow:-0.7px 0.7px 0.3px rgba(0,0,0,.8),0 0 2px #fff,0 0 2px #fff;">4.50 V</div><div class="t" style="right:173.00px;top:694.17px;font-size:13.5px;line-height:13.5px;color:#2222b8;font-weight:normal;text-shadow:-0.7px 0.7px 0.3px rgba(0,0,0,.8),0 0 2px #fff,0 0 2px #fff;">3 V</div><div class="t" style="right:173.00px;top:717.17px;font-size:13.5px;line-height:13.5px;color:#2222b8;font-weight:normal;text-shadow:-0.7px 0.7px 0.3px rgba(0,0,0,.8),0 0 2px #fff,0 0 2px #fff;">1.50 V</div><div class="t" style="right:173.00px;top:739.97px;font-size:13.5px;line-height:13.5px;color:#2222b8;font-weight:normal;text-shadow:-0.7px 0.7px 0.3px rgba(0,0,0,.8),0 0 2px #fff,0 0 2px #fff;">0 V</div><div class="t" style="right:173.00px;top:765.37px;font-size:13.5px;line-height:13.5px;color:#f0901e;font-weight:normal;text-shadow:-0.7px 0.7px 0.3px rgba(0,0,0,.8),0 0 2px #fff,0 0 2px #fff;">549.393 mT</div><div class="t" style="right:173.00px;top:788.17px;font-size:13.5px;line-height:13.5px;color:#f0901e;font-weight:normal;text-shadow:-0.7px 0.7px 0.3px rgba(0,0,0,.8),0 0 2px #fff,0 0 2px #fff;">412.044 mT</div><div class="t" style="right:173.00px;top:811.17px;font-size:13.5px;line-height:13.5px;color:#f0901e;font-weight:normal;text-shadow:-0.7px 0.7px 0.3px rgba(0,0,0,.8),0 0 2px #fff,0 0 2px #fff;">274.696 mT</div><div class="t" style="right:173.00px;top:834.17px;font-size:13.5px;line-height:13.5px;color:#f0901e;font-weight:normal;text-shadow:-0.7px 0.7px 0.3px rgba(0,0,0,.8),0 0 2px #fff,0 0 2px #fff;">137.348 mT</div><div class="t" style="right:173.00px;top:857.17px;font-size:13.5px;line-height:13.5px;color:#f0901e;font-weight:normal;text-shadow:-0.7px 0.7px 0.3px rgba(0,0,0,.8),0 0 2px #fff,0 0 2px #fff;">0 T</div><div class="t" style="right:173.00px;top:881.27px;font-size:13.5px;line-height:13.5px;color:#6c2a92;font-weight:normal;text-shadow:-0.7px 0.7px 0.3px rgba(0,0,0,.8),0 0 2px #fff,0 0 2px #fff;">710.856 A</div><div class="t" style="right:173.00px;top:904.57px;font-size:13.5px;line-height:13.5px;color:#6c2a92;font-weight:normal;text-shadow:-0.7px 0.7px 0.3px rgba(0,0,0,.8),0 0 2px #fff,0 0 2px #fff;">0 A</div><div class="t" style="right:173.00px;top:928.47px;font-size:13.5px;line-height:13.5px;color:#6c2a92;font-weight:normal;text-shadow:-0.7px 0.7px 0.3px rgba(0,0,0,.8),0 0 2px #fff,0 0 2px #fff;">-710.856 A</div><div class="t" style="right:173.00px;top:951.27px;font-size:13.5px;line-height:13.5px;color:#6c2a92;font-weight:normal;text-shadow:-0.7px 0.7px 0.3px rgba(0,0,0,.8),0 0 2px #fff,0 0 2px #fff;">-1.421713 kA</div><div class="t" style="right:173.00px;top:974.07px;font-size:13.5px;line-height:13.5px;color:#6c2a92;font-weight:normal;text-shadow:-0.7px 0.7px 0.3px rgba(0,0,0,.8),0 0 2px #fff,0 0 2px #fff;">-2.132569 kA</div><div class="t" style="left:-161.60px;width:400px;text-align:center;top:976.17px;font-size:13.5px;line-height:13.5px;color:#222;font-weight:normal;text-shadow:-0.5px 0.5px 0.3px rgba(0,0,0,.6),0 0 2px #fff,0 0 2px #fff;">0 s</div><div class="t" style="left:13.20px;width:400px;text-align:center;top:976.17px;font-size:13.5px;line-height:13.5px;color:#222;font-weight:normal;text-shadow:-0.5px 0.5px 0.3px rgba(0,0,0,.6),0 0 2px #fff,0 0 2px #fff;">4 ms</div><div class="t" style="left:188.00px;width:400px;text-align:center;top:976.17px;font-size:13.5px;line-height:13.5px;color:#222;font-weight:normal;text-shadow:-0.5px 0.5px 0.3px rgba(0,0,0,.6),0 0 2px #fff,0 0 2px #fff;">8 ms</div><div class="t" style="left:362.80px;width:400px;text-align:center;top:976.17px;font-size:13.5px;line-height:13.5px;color:#222;font-weight:normal;text-shadow:-0.5px 0.5px 0.3px rgba(0,0,0,.6),0 0 2px #fff,0 0 2px #fff;">12 ms</div><div class="t" style="left:537.60px;width:400px;text-align:center;top:976.17px;font-size:13.5px;line-height:13.5px;color:#222;font-weight:normal;text-shadow:-0.5px 0.5px 0.3px rgba(0,0,0,.6),0 0 2px #fff,0 0 2px #fff;">16 ms</div><div class="t" style="left:712.40px;width:400px;text-align:center;top:976.17px;font-size:13.5px;line-height:13.5px;color:#222;font-weight:normal;text-shadow:-0.5px 0.5px 0.3px rgba(0,0,0,.6),0 0 2px #fff,0 0 2px #fff;">20 ms</div><div class="t" style="left:887.20px;width:400px;text-align:center;top:976.17px;font-size:13.5px;line-height:13.5px;color:#222;font-weight:normal;text-shadow:-0.5px 0.5px 0.3px rgba(0,0,0,.6),0 0 2px #fff,0 0 2px #fff;">24 ms</div><div class="t" style="left:1062.00px;width:400px;text-align:center;top:976.17px;font-size:13.5px;line-height:13.5px;color:#222;font-weight:normal;text-shadow:-0.5px 0.5px 0.3px rgba(0,0,0,.6),0 0 2px #fff,0 0 2px #fff;">28 ms</div><div class="t" style="left:1236.80px;width:400px;text-align:center;top:976.17px;font-size:13.5px;line-height:13.5px;color:#222;font-weight:normal;text-shadow:-0.5px 0.5px 0.3px rgba(0,0,0,.6),0 0 2px #fff,0 0 2px #fff;">32 ms</div><div class="t" style="left:1411.60px;width:400px;text-align:center;top:976.17px;font-size:13.5px;line-height:13.5px;color:#222;font-weight:normal;text-shadow:-0.5px 0.5px 0.3px rgba(0,0,0,.6),0 0 2px #fff,0 0 2px #fff;">36 ms</div><svg class="a" style="left:1700px;top:55px" width="60" height="50"><path d="M10 9.5 L43 9.5 Q47 9.5 47 13.5 L47 43 Z" fill="#4d4d4d" stroke="#111" stroke-width="1.5" stroke-linejoin="round"/><circle cx="37" cy="16.5" r="4.2" fill="none" stroke="#9a9a9a" stroke-width="1.6"/><line x1="34" y1="19.5" x2="28.5" y2="25" stroke="#9a9a9a" stroke-width="2.2" stroke-linecap="round"/></svg><svg class="a" style="left:1720px;top:685px" width="40" height="30"><path d="M10.5 15.5 L21 5.8 L21 25.2 Z" fill="#2424c0"/><rect x="20" y="14" width="11" height="3.2" fill="#2424c0"/></svg><div class="a" style="left:1769px;top:29px;width:151px;height:966px;box-sizing:border-box;border-left:1px solid #5e5852;border-top:1px solid #5e5852;border-bottom:1px solid #5e5852"></div><div class="a" style="left:1759.8px;top:501.40000000000003px;width:4.4px;height:4.4px;border-radius:50%;background:#c4c4c4"></div><div class="a" style="left:1759.8px;top:510.00000000000006px;width:4.4px;height:4.4px;border-radius:50%;background:#c4c4c4"></div><div class="a" style="left:1759.8px;top:518.5999999999999px;width:4.4px;height:4.4px;border-radius:50%;background:#c4c4c4"></div><div class="t" style="left:1786px;top:-1.5px;font-size:30px;line-height:32px;font-weight:bold;color:#fff;letter-spacing:-1.85px;-webkit-text-stroke:0.6px #fff;">Tektronix</div><svg class="a" style="left:1800px;top:0" width="50" height="30"><path d="M15.2 25.7 L21.6 25.7 L31 9.5 L24.6 9.5 Z" fill="#1ebee0"/></svg><div class="t" style="left:1645.00px;width:400px;text-align:center;top:31.20px;font-size:15px;line-height:15px;color:#e6e6e6;font-weight:bold;letter-spacing:1px;">Add New...</div><div class="btn" style="left:1778px;top:54.5px;width:63px;height:36.5px"></div><div class="t" style="left:1609.50px;width:400px;text-align:center;top:64.30px;font-size:15px;line-height:15px;color:#f0f0f0;font-weight:normal;">Cursors</div><div class="btn" style="left:1850px;top:54.5px;width:63px;height:36.5px"></div><div class="t" style="left:1681.50px;width:400px;text-align:center;top:64.30px;font-size:15px;line-height:15px;color:#f0f0f0;font-weight:normal;">Callout</div><div class="btn" style="left:1778px;top:100.5px;width:63px;height:36.5px"></div><div class="t" style="left:1609.50px;width:400px;text-align:center;top:110.30px;font-size:15px;line-height:15px;color:#f0f0f0;font-weight:normal;">Measure</div><div class="btn" style="left:1850px;top:100.5px;width:63px;height:36.5px"></div><div class="t" style="left:1681.50px;width:400px;text-align:center;top:110.30px;font-size:15px;line-height:15px;color:#f0f0f0;font-weight:normal;">Search</div><div class="btn" style="left:1778px;top:146.5px;width:63px;height:36.5px"></div><div class="t" style="left:1609.50px;width:400px;text-align:center;top:148.10px;font-size:15px;line-height:15px;color:#f0f0f0;font-weight:normal;">Results</div><div class="t" style="left:1609.50px;width:400px;text-align:center;top:163.20px;font-size:15px;line-height:15px;color:#f0f0f0;font-weight:normal;">Table</div><div class="btn" style="left:1850px;top:146.5px;width:63px;height:36.5px"></div><div class="t" style="left:1681.50px;width:400px;text-align:center;top:156.30px;font-size:15px;line-height:15px;color:#f0f0f0;font-weight:normal;">Plot</div><div class="btn" style="left:1778px;top:196.5px;width:63px;height:36.5px"></div><svg class="a" style="left:1778px;top:196.5px" width="63" height="37"><rect x="19.5" y="7.5" width="22" height="20" fill="none" stroke="#a8a8a8" stroke-width="1.6" stroke-dasharray="3 2"/><circle cx="32" cy="15" r="5" fill="none" stroke="#b0b0b0" stroke-width="1.8"/><line x1="28.5" y1="18.5" x2="23" y2="24" stroke="#b0b0b0" stroke-width="2.4" stroke-linecap="round"/><path d="M35 22 L42 26 L39 27 L41 31 L39.5 32 L37.5 28 L35.5 30 Z" fill="#b0b0b0"/></svg><div class="btn" style="left:1850px;top:196.5px;width:63px;height:36.5px"></div><div class="t" style="left:1681.50px;width:400px;text-align:center;top:206.30px;font-size:15px;line-height:15px;color:#f0f0f0;font-weight:normal;">More...</div><div class="a" style="left:1773px;top:189px;width:144px;height:1px;background:#5e5852"></div><div class="a" style="left:1773px;top:241px;width:144px;height:1px;background:#5e5852"></div><div class="a" style="left:3px;top:984px;width:90px;height:95px;border-radius:6px 6px 5px 5px;overflow:hidden;background:#c8c8c8"><div class="a" style="left:0;top:0;width:90px;height:19px;background:#1e1e1e"></div><div class="a" style="left:0;top:19px;width:90px;height:2px;background:#a4acac"></div><div class="a" style="left:0;top:21px;width:90px;height:17px;background:#ff0000"></div></div><div class="t" style="left:8.50px;top:985.20px;font-size:15px;line-height:15px;color:#f0ea3c;font-weight:normal;">Ch 1</div><svg class="a" style="left:3.6px;top:1006px" width="16" height="15"><path d="M7.6 0.8 L14.8 14 L0.6 14 Z" fill="#f0f000" stroke="#303060" stroke-width="1"/><rect x="6.9" y="5" width="1.5" height="6.5" fill="#a0a040"/></svg><div class="t" style="left:19.80px;top:1004.80px;font-size:15px;line-height:15px;color:#fff;font-weight:normal;">Clipping</div><div class="t" style="left:8.50px;top:1024.10px;font-size:15px;line-height:15px;color:#111;font-weight:normal;">5 V/div</div><div class="t" style="left:8.50px;top:1043.10px;font-size:15px;line-height:15px;color:#111;font-weight:normal;">1 MΩ</div><div class="t" style="left:8.50px;top:1062.10px;font-size:15px;line-height:15px;color:#111;font-weight:normal;">200 kHz</div><div class="t" style="left:75.00px;top:1060.19px;font-size:11px;line-height:11px;color:#111;font-weight:normal;">B</div><div class="t" style="left:81.00px;top:1064.04px;font-size:10px;line-height:10px;color:#111;font-weight:normal;">w</div><div class="a" style="left:98px;top:984px;width:90px;height:95px;border-radius:6px 6px 5px 5px;overflow:hidden;background:#c8c8c8"><div class="a" style="left:0;top:0;width:90px;height:19px;background:#1c4044"></div><div class="a" style="left:0;top:19px;width:90px;height:2px;background:#a4acac"></div><div class="a" style="left:0;top:21px;width:90px;height:17px;background:#ff0000"></div></div><div class="t" style="left:103.50px;top:985.20px;font-size:15px;line-height:15px;color:#2cc8d8;font-weight:normal;">Ch 2</div><svg class="a" style="left:98.6px;top:1006px" width="16" height="15"><path d="M7.6 0.8 L14.8 14 L0.6 14 Z" fill="#f0f000" stroke="#303060" stroke-width="1"/><rect x="6.9" y="5" width="1.5" height="6.5" fill="#a0a040"/></svg><div class="t" style="left:114.80px;top:1004.80px;font-size:15px;line-height:15px;color:#fff;font-weight:normal;">Clipping</div><div class="t" style="left:103.50px;top:1024.10px;font-size:15px;line-height:15px;color:#111;font-weight:normal;">250 mV/div</div><div class="t" style="left:103.50px;top:1043.10px;font-size:15px;line-height:15px;color:#111;font-weight:normal;">1 MΩ</div><div class="t" style="left:103.50px;top:1062.10px;font-size:15px;line-height:15px;color:#111;font-weight:normal;">200 kHz</div><div class="t" style="left:170.00px;top:1060.19px;font-size:11px;line-height:11px;color:#111;font-weight:normal;">B</div><div class="t" style="left:176.00px;top:1064.04px;font-size:10px;line-height:10px;color:#111;font-weight:normal;">w</div><div class="a" style="left:193px;top:984px;width:90px;height:95px;border-radius:6px 6px 5px 5px;overflow:hidden;background:#c8c8c8"><div class="a" style="left:0;top:0;width:90px;height:19px;background:#45252b"></div><div class="a" style="left:0;top:19px;width:90px;height:2px;background:#a4acac"></div><div class="a" style="left:0;top:21px;width:90px;height:17px;background:#ff0000"></div></div><div class="t" style="left:198.50px;top:985.20px;font-size:15px;line-height:15px;color:#f4f0f0;font-weight:normal;">Ch 3</div><svg class="a" style="left:193.6px;top:1006px" width="16" height="15"><path d="M7.6 0.8 L14.8 14 L0.6 14 Z" fill="#f0f000" stroke="#303060" stroke-width="1"/><rect x="6.9" y="5" width="1.5" height="6.5" fill="#a0a040"/></svg><div class="t" style="left:209.80px;top:1004.80px;font-size:15px;line-height:15px;color:#fff;font-weight:normal;">Clipping</div><div class="t" style="left:198.50px;top:1024.10px;font-size:15px;line-height:15px;color:#111;font-weight:normal;">450 mV/div</div><div class="t" style="left:198.50px;top:1043.10px;font-size:15px;line-height:15px;color:#111;font-weight:normal;">1 MΩ</div><div class="t" style="left:198.50px;top:1062.10px;font-size:15px;line-height:15px;color:#111;font-weight:normal;">200 kHz</div><div class="t" style="left:265.00px;top:1060.19px;font-size:11px;line-height:11px;color:#111;font-weight:normal;">B</div><div class="t" style="left:271.00px;top:1064.04px;font-size:10px;line-height:10px;color:#111;font-weight:normal;">w</div><div class="a" style="left:288px;top:1003px;width:90px;height:76px;border-radius:6px 6px 5px 5px;overflow:hidden;background:#c8c8c8"><div class="a" style="left:0;top:0;width:90px;height:19px;background:#333f20"></div><div class="a" style="left:0;top:19px;width:90px;height:2px;background:#a8a8a8"></div></div><div class="t" style="left:293.50px;top:1003.80px;font-size:15px;line-height:15px;color:#8cd43c;font-weight:normal;">Ch 4</div><div class="t" style="left:293.50px;top:1024.10px;font-size:15px;line-height:15px;color:#111;font-weight:normal;">200 mV/div</div><div class="t" style="left:293.50px;top:1043.10px;font-size:15px;line-height:15px;color:#111;font-weight:normal;">1 MΩ</div><div class="t" style="left:293.50px;top:1062.10px;font-size:15px;line-height:15px;color:#111;font-weight:normal;">200 kHz</div><div class="t" style="left:360.00px;top:1060.19px;font-size:11px;line-height:11px;color:#111;font-weight:normal;">B</div><div class="t" style="left:366.00px;top:1064.04px;font-size:10px;line-height:10px;color:#111;font-weight:normal;">w</div><div class="a" style="left:383px;top:1003px;width:90px;height:76px;border-radius:6px 6px 5px 5px;overflow:hidden;background:#c8c8c8"><div class="a" style="left:0;top:0;width:90px;height:19px;background:#4a3521"></div><div class="a" style="left:0;top:19px;width:90px;height:2px;background:#a8a8a8"></div></div><div class="t" style="left:388.50px;top:1003.80px;font-size:15px;line-height:15px;color:#f5a040;font-weight:normal;">Ch 5</div><div class="t" style="left:388.50px;top:1024.10px;font-size:15px;line-height:15px;color:#111;font-weight:normal;">1 V/div</div><div class="t" style="left:388.50px;top:1043.10px;font-size:15px;line-height:15px;color:#111;font-weight:normal;">1 MΩ</div><div class="t" style="left:388.50px;top:1062.10px;font-size:15px;line-height:15px;color:#111;font-weight:normal;">200 kHz</div><div class="t" style="left:455.00px;top:1060.19px;font-size:11px;line-height:11px;color:#111;font-weight:normal;">B</div><div class="t" style="left:461.00px;top:1064.04px;font-size:10px;line-height:10px;color:#111;font-weight:normal;">w</div><div class="a" style="left:478px;top:984px;width:90px;height:95px;border-radius:6px 6px 5px 5px;overflow:hidden;background:#c8c8c8"><div class="a" style="left:0;top:0;width:90px;height:19px;background:#1e1e40"></div><div class="a" style="left:0;top:19px;width:90px;height:2px;background:#a4acac"></div><div class="a" style="left:0;top:21px;width:90px;height:17px;background:#ff0000"></div></div><div class="t" style="left:483.50px;top:985.20px;font-size:15px;line-height:15px;color:#f4f4f4;font-weight:normal;">Ch 6</div><svg class="a" style="left:478.6px;top:1006px" width="16" height="15"><path d="M7.6 0.8 L14.8 14 L0.6 14 Z" fill="#f0f000" stroke="#303060" stroke-width="1"/><rect x="6.9" y="5" width="1.5" height="6.5" fill="#a0a040"/></svg><div class="t" style="left:494.80px;top:1004.80px;font-size:15px;line-height:15px;color:#fff;font-weight:normal;">Clipping</div><div class="t" style="left:483.50px;top:1024.10px;font-size:15px;line-height:15px;color:#111;font-weight:normal;">750 mV/div</div><div class="t" style="left:483.50px;top:1043.10px;font-size:15px;line-height:15px;color:#111;font-weight:normal;">1 MΩ</div><div class="t" style="left:483.50px;top:1062.10px;font-size:15px;line-height:15px;color:#111;font-weight:normal;">200 kHz</div><div class="t" style="left:550.00px;top:1060.19px;font-size:11px;line-height:11px;color:#111;font-weight:normal;">B</div><div class="t" style="left:556.00px;top:1064.04px;font-size:10px;line-height:10px;color:#111;font-weight:normal;">w</div><div class="a" style="left:573px;top:984px;width:90px;height:95px;border-radius:6px 6px 5px 5px;overflow:hidden;background:#c8c8c8"><div class="a" style="left:0;top:0;width:90px;height:19px;background:#4a3521"></div><div class="a" style="left:0;top:19px;width:90px;height:2px;background:#a4acac"></div><div class="a" style="left:0;top:21px;width:90px;height:17px;background:#ff0000"></div></div><div class="t" style="left:578.50px;top:985.20px;font-size:15px;line-height:15px;color:#f0a030;font-weight:normal;">Math 1</div><svg class="a" style="left:573.6px;top:1006px" width="16" height="15"><path d="M7.6 0.8 L14.8 14 L0.6 14 Z" fill="#f0f000" stroke="#303060" stroke-width="1"/><rect x="6.9" y="5" width="1.5" height="6.5" fill="#a0a040"/></svg><div class="t" style="left:589.80px;top:1004.80px;font-size:15px;line-height:15px;color:#fff;font-weight:normal;">Empty i...</div><div class="t" style="left:578.50px;top:1024.10px;font-size:15px;line-height:15px;color:#111;font-weight:normal;"><b>68.6 mT/div</b></div><div class="t" style="left:578.50px;top:1043.10px;font-size:15px;line-height:15px;color:#111;font-weight:normal;">Intg(Ch2)...</div><div class="a" style="left:668px;top:984px;width:90px;height:95px;border-radius:6px 6px 5px 5px;overflow:hidden;background:#c8c8c8"><div class="a" style="left:0;top:0;width:90px;height:19px;background:#6e2d8c"></div><div class="a" style="left:0;top:19px;width:90px;height:2px;background:#a4acac"></div><div class="a" style="left:0;top:21px;width:90px;height:17px;background:#ff0000"></div></div><div class="t" style="left:673.50px;top:985.20px;font-size:15px;line-height:15px;color:#f8f8f8;font-weight:normal;">Math 2</div><svg class="a" style="left:668.6px;top:1006px" width="16" height="15"><path d="M7.6 0.8 L14.8 14 L0.6 14 Z" fill="#f0f000" stroke="#303060" stroke-width="1"/><rect x="6.9" y="5" width="1.5" height="6.5" fill="#a0a040"/></svg><div class="t" style="left:684.80px;top:1004.80px;font-size:15px;line-height:15px;color:#fff;font-weight:normal;">Empty i...</div><div class="t" style="left:673.50px;top:1024.10px;font-size:15px;line-height:15px;color:#111;font-weight:normal;"><b>355.42 A/...</b></div><div class="t" style="left:673.50px;top:1043.10px;font-size:15px;line-height:15px;color:#111;font-weight:normal;">-Intg(Ch3...</div><div class="a" style="left:1118px;top:1000px;width:1px;height:78px;background:#5e5852"></div><div class="a" style="left:1269px;top:1000px;width:1px;height:78px;background:#5e5852"></div><div class="btn" style="left:1129px;top:999.5px;width:39.5px;height:79px;border-radius:7px"></div><div class="a" style="left:1133.3px;top:1007px;width:31.5px;height:2px;background:#b02020"></div><div class="t" style="left:948.75px;width:400px;text-align:center;top:1020.40px;font-size:15px;line-height:15px;color:#f0f0f0;font-weight:normal;">Add</div><div class="t" style="left:948.75px;width:400px;text-align:center;top:1035.90px;font-size:15px;line-height:15px;color:#f0f0f0;font-weight:normal;">New</div><div class="t" style="left:948.75px;width:400px;text-align:center;top:1051.80px;font-size:15px;line-height:15px;color:#f0f0f0;font-weight:normal;">Math</div><div class="btn" style="left:1174.5px;top:999.5px;width:39.5px;height:79px;border-radius:7px"></div><div class="a" style="left:1178.8px;top:1007px;width:31.5px;height:2px;background:#c4c8dc"></div><div class="t" style="left:994.25px;width:400px;text-align:center;top:1020.40px;font-size:15px;line-height:15px;color:#f0f0f0;font-weight:normal;">Add</div><div class="t" style="left:994.25px;width:400px;text-align:center;top:1035.90px;font-size:15px;line-height:15px;color:#f0f0f0;font-weight:normal;">New</div><div class="t" style="left:994.25px;width:400px;text-align:center;top:1051.80px;font-size:15px;line-height:15px;color:#f0f0f0;font-weight:normal;">Ref</div><div class="btn" style="left:1219.5px;top:999.5px;width:39.5px;height:79px;border-radius:7px"></div><div class="a" style="left:1223.8px;top:1007px;width:31.5px;height:2px;background:#c050f0"></div><div class="t" style="left:1039.25px;width:400px;text-align:center;top:1020.40px;font-size:15px;line-height:15px;color:#f0f0f0;font-weight:normal;">Add</div><div class="t" style="left:1039.25px;width:400px;text-align:center;top:1035.90px;font-size:15px;line-height:15px;color:#f0f0f0;font-weight:normal;">New</div><div class="t" style="left:1039.25px;width:400px;text-align:center;top:1051.80px;font-size:15px;line-height:15px;color:#f0f0f0;font-weight:normal;">Bus</div><div class="a" style="left:1281px;top:1003.5px;width:198px;height:74.5px;box-sizing:border-box;border:1px solid #1a1a1a;border-radius:5px;overflow:hidden;background:#c8c8c8"><div class="a" style="left:0;top:0;width:198px;height:18.5px;background:#5c5c5e"></div><div class="a" style="left:0;top:18.5px;width:198px;height:2.5px;background:#a6a6a6"></div></div><div class="t" style="left:1286.80px;top:1005.46px;font-size:16px;line-height:16px;color:#f4f4f4;font-weight:normal;">Horizontal</div><div class="t" style="left:1285.50px;top:1024.10px;font-size:15px;line-height:15px;color:#111;font-weight:normal;">4 ms/div</div><div class="t" style="left:1391.00px;top:1024.10px;font-size:15px;line-height:15px;color:#111;font-weight:normal;">40 ms</div><div class="t" style="left:1285.50px;top:1043.00px;font-size:15px;line-height:15px;color:#111;font-weight:normal;">SR: 1 MS/s</div><div class="t" style="left:1392.00px;top:1043.00px;font-size:15px;line-height:15px;color:#111;font-weight:normal;">1 μs/pt</div><div class="t" style="left:1285.50px;top:1061.90px;font-size:15px;line-height:15px;color:#111;font-weight:normal;">RL: 40 kpts</div><div class="t" style="left:1405.20px;top:1061.90px;font-size:15px;line-height:15px;color:#111;font-weight:normal;">2%</div><svg class="a" style="left:1390px;top:1062px" width="12" height="14"><path d="M1.2 1.2 h8.6 v8.8 h-2.6 l-2.1 3.2 l-2.1 -3.2 h-1.8 z" fill="#000" stroke="#f28c22" stroke-width="1.4"/><path d="M3 3 h5 v1.2 h-1.9 v4.6 h-1.2 v-4.6 h-1.9 z" fill="#fff"/></svg><div class="a" style="left:1486px;top:1003.5px;width:158px;height:74.5px;box-sizing:border-box;border:1px solid #1a1a1a;border-radius:5px;overflow:hidden;background:#c8c8c8"><div class="a" style="left:0;top:0;width:158px;height:18.5px;background:#5c5c5e"></div><div class="a" style="left:0;top:18.5px;width:158px;height:2.5px;background:#a6a6a6"></div></div><div class="t" style="left:1491.80px;top:1005.46px;font-size:16px;line-height:16px;color:#f4f4f4;font-weight:normal;">Trigger</div><div class="a" style="left:1490.3px;top:1025.4px;width:29.2px;height:15px;box-sizing:border-box;border:1.3px solid #111;border-radius:6px;background:#2424c8"></div><div class="t" style="left:1304.90px;width:400px;text-align:center;top:1025.15px;font-size:14px;line-height:14px;color:#fff;font-weight:normal;">6</div><svg class="a" style="left:1528px;top:1025px" width="20" height="15"><path d="M2.5 12 H5.5 L13.5 2.5 H17" fill="none" stroke="#303070" stroke-width="1.3"/></svg><div class="t" style="left:1556.20px;top:1024.10px;font-size:15px;line-height:15px;color:#111;font-weight:normal;">3 V</div><div class="a" style="left:1651px;top:1003.5px;width:148px;height:74.5px;box-sizing:border-box;border:1px solid #1a1a1a;border-radius:5px;overflow:hidden;background:#c8c8c8"><div class="a" style="left:0;top:0;width:148px;height:18.5px;background:#5c5c5e"></div><div class="a" style="left:0;top:18.5px;width:148px;height:2.5px;background:#a6a6a6"></div></div><div class="t" style="left:1656.80px;top:1005.46px;font-size:16px;line-height:16px;color:#f4f4f4;font-weight:normal;">Acquisition</div><div class="t" style="left:1655.30px;top:1024.10px;font-size:15px;line-height:15px;color:#111;font-weight:normal;">Manual,</div><div class="t" style="left:1736.40px;top:1024.10px;font-size:15px;line-height:15px;color:#111;font-weight:normal;">Analyze</div><div class="t" style="left:1655.30px;top:1043.00px;font-size:15px;line-height:15px;color:#111;font-weight:normal;">High Res: 16 bits</div><div class="t" style="left:1655.30px;top:1061.90px;font-size:15px;line-height:15px;color:#111;font-weight:normal;">Single: 1 /1</div><div class="a" style="left:1811px;top:1000px;width:1px;height:77px;background:#5e5852"></div><div class="a" style="left:1822.5px;top:999.5px;width:89px;height:35px;box-sizing:border-box;border:1px solid #777;border-radius:7px;background:#ff1e26"></div><div class="t" style="left:1667.00px;width:400px;text-align:center;top:1008.75px;font-size:14px;line-height:14px;color:#fff;font-weight:bold;">Stopped</div><div class="a" style="left:1822px;top:1041px;width:90px;height:37px;box-sizing:border-box;border:1px solid #888;border-radius:6px;background:#c8c8c8"></div><div class="t" style="left:1667.00px;width:400px;text-align:center;top:1041.90px;font-size:15px;line-height:15px;color:#111;font-weight:normal;">11 Nov 2025</div><div class="t" style="left:1667.00px;width:400px;text-align:center;top:1058.50px;font-size:15px;line-height:15px;color:#111;font-weight:normal;">2:35:47 PM</div></body></html>
